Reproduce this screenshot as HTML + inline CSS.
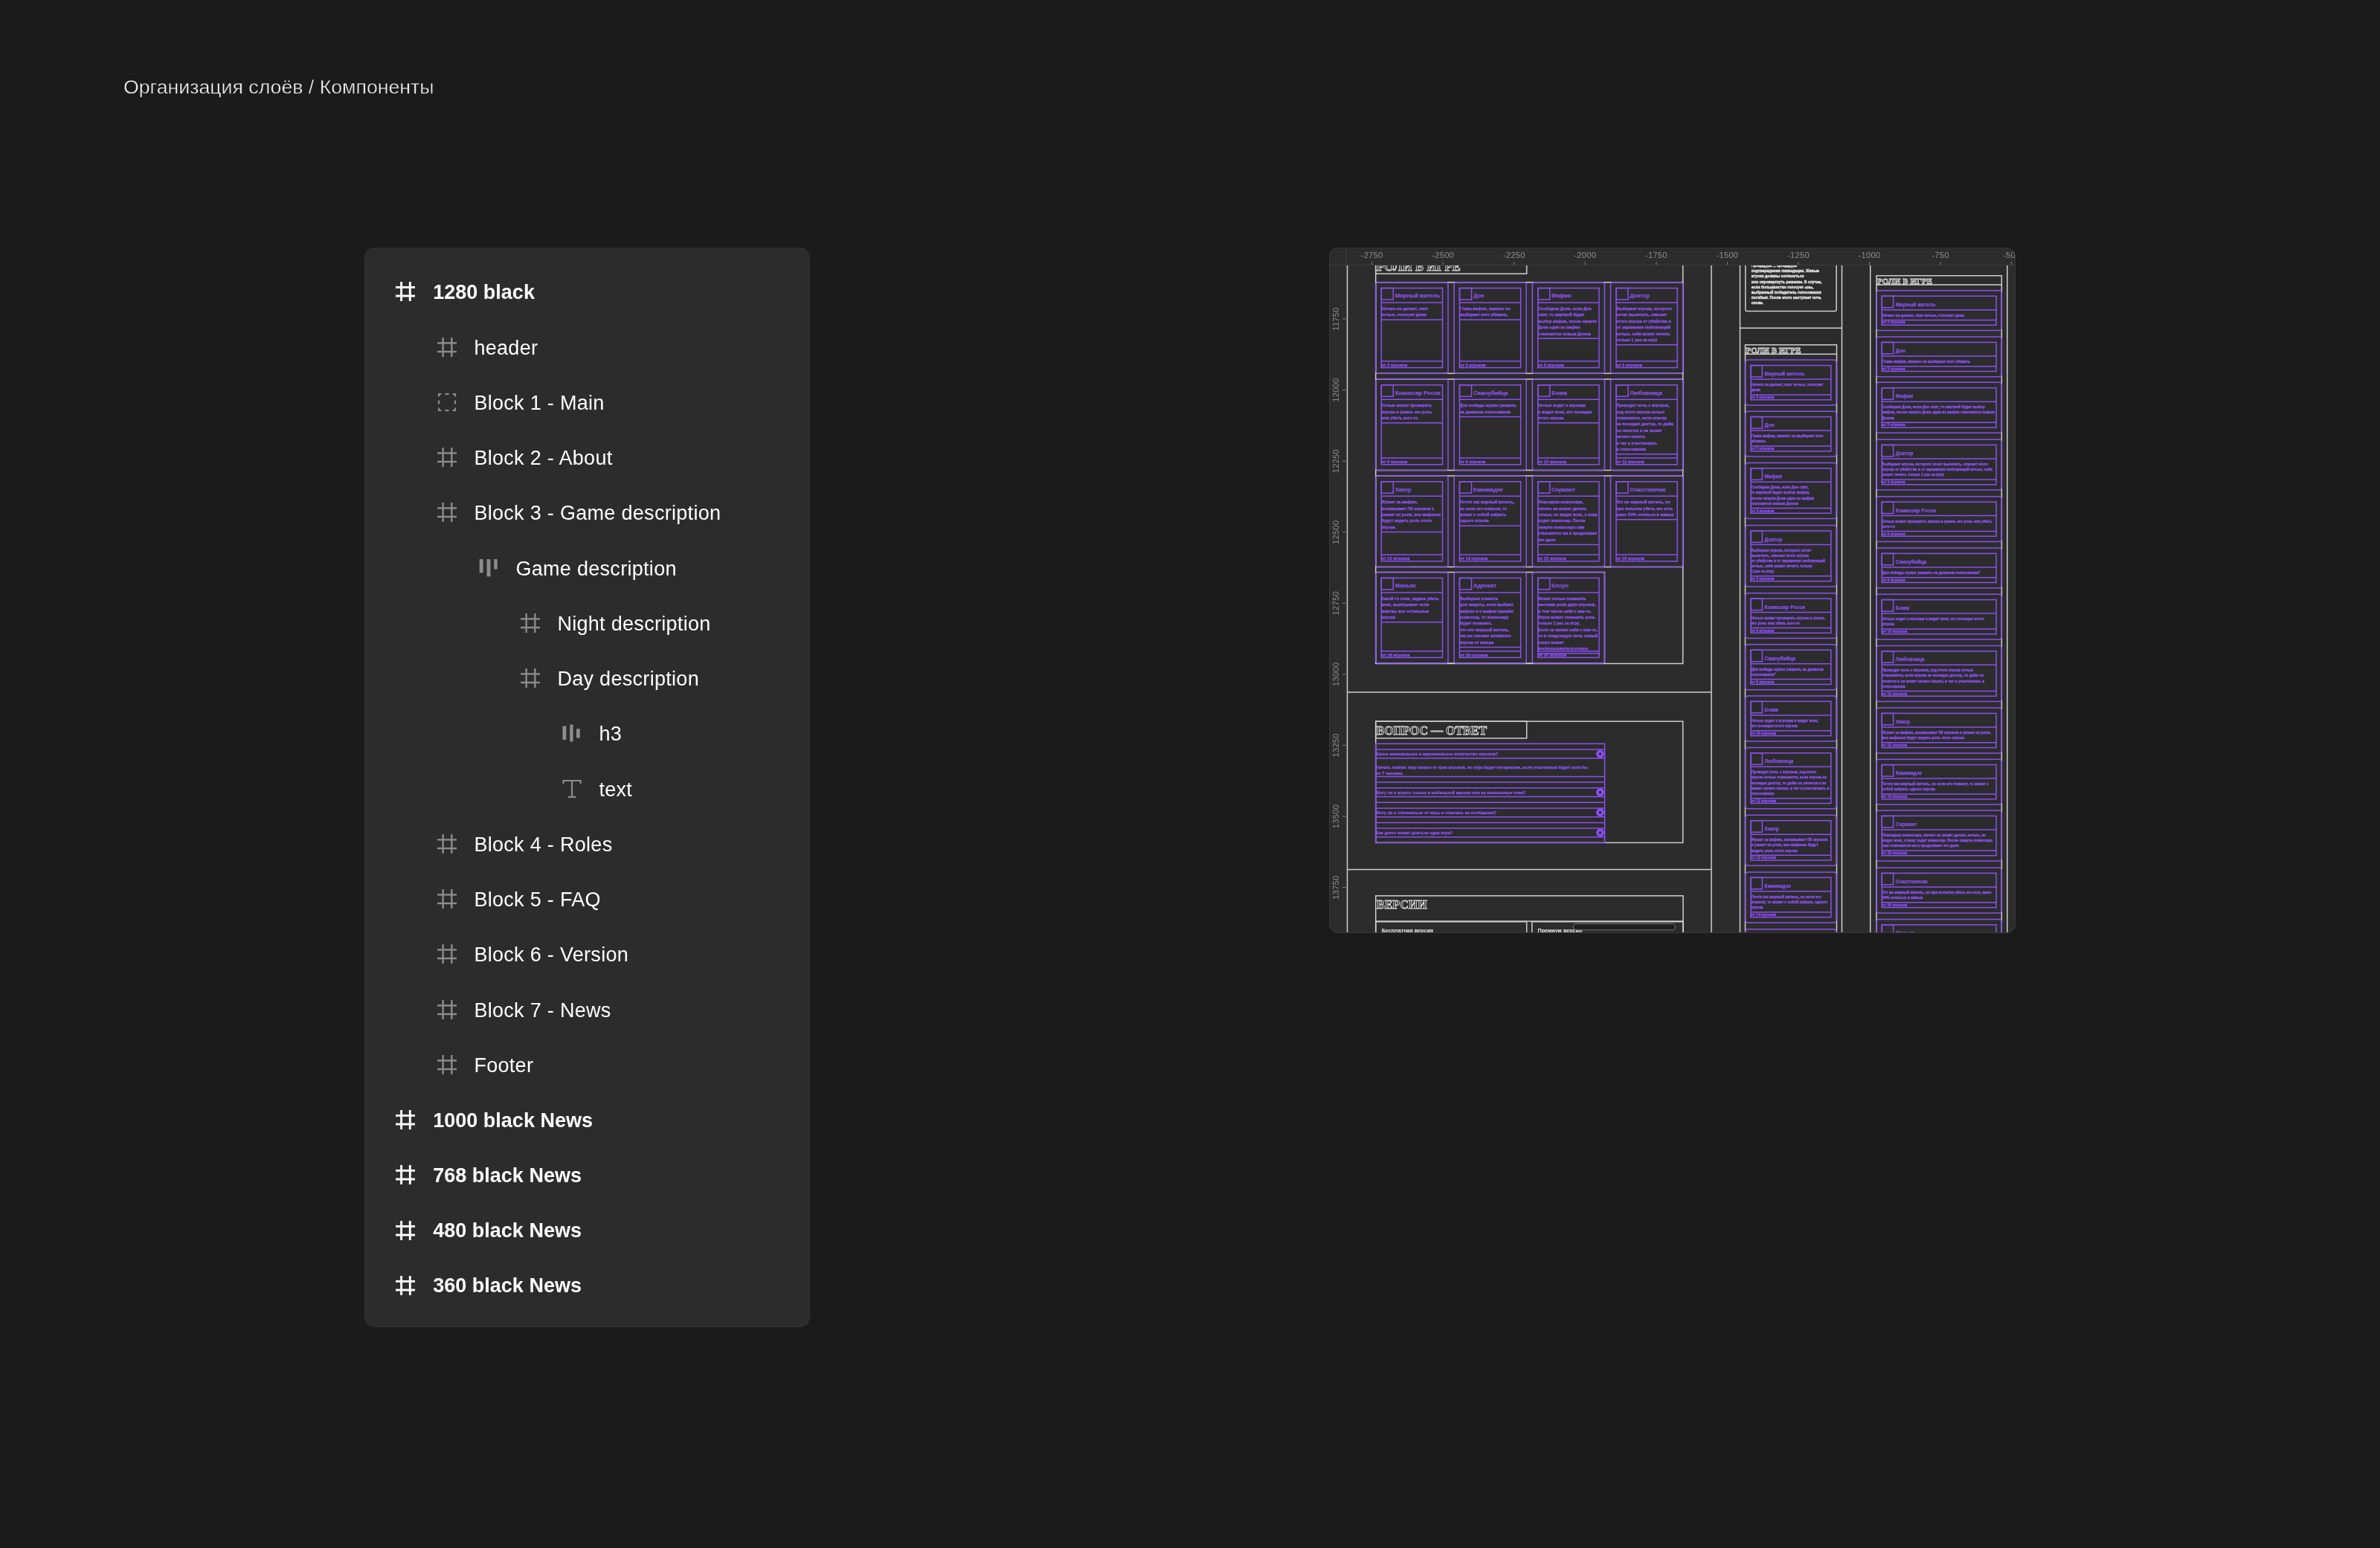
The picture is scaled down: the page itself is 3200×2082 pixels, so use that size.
<!DOCTYPE html><html><head><meta charset="utf-8"><style>
html,body{margin:0;padding:0;width:3200px;height:2082px;overflow:hidden;background:#1c1b1c;}
body{position:relative;font-family:"Liberation Sans", sans-serif;}
#wrap{position:absolute;left:0;top:0;width:3200px;height:2082px;will-change:transform;}
.t{position:absolute;white-space:nowrap;color:#fff;}
#panel{position:absolute;left:490px;top:333px;width:598.5px;height:1452px;background:#2c2c2c;border-radius:14px;box-shadow:inset 0 0 0 1px #313131;}
.row{position:absolute;height:40px;}
.lbl{position:absolute;white-space:nowrap;color:#fff;font-size:27px;line-height:40px;top:0;}
.ico{position:absolute;}
#canvas{position:absolute;left:0;top:0;}
</style></head><body><div id="wrap">
<div class="t" id="title" style="left:166px;top:99px;font-size:26.7px;line-height:36px;color:#f2f2f2;font-weight:normal;-webkit-text-stroke:0.45px #1c1b1c;">Организация слоёв / Компоненты</div>

<div id="panel"></div>
<svg class="ico" style="left:532px;top:379px" width="26" height="26" viewBox="0 0 26 26"><g stroke="#ffffff" stroke-width="2.9" fill="none"><line x1="7.6" y1="0" x2="7.6" y2="26"/><line x1="19.3" y1="0" x2="19.3" y2="26"/><line x1="0" y1="7.4" x2="26" y2="7.4"/><line x1="0" y1="19" x2="26" y2="19"/></g></svg>
<div class="lbl" style="left:582.30px;top:372.80px;font-weight:bold;letter-spacing:0px;">1280 black</div>
<svg class="ico" style="left:588px;top:454px" width="26" height="26" viewBox="0 0 26 26"><g stroke="#8c8c8c" stroke-width="2.4" fill="none"><line x1="7.6" y1="0" x2="7.6" y2="26"/><line x1="19.3" y1="0" x2="19.3" y2="26"/><line x1="0" y1="7.4" x2="26" y2="7.4"/><line x1="0" y1="19" x2="26" y2="19"/></g></svg>
<div class="lbl" style="left:637.40px;top:447.55px;font-weight:normal;letter-spacing:0.3px;">header</div>
<svg class="ico" style="left:588px;top:527.8px" width="26" height="26" viewBox="0 0 26 26"><g stroke="#8c8c8c" stroke-width="2.2" fill="none"><path d="M2,5.5 V2 H5.5"/><path d="M20.5,2 H24 V5.5"/><path d="M24,20.5 V24 H20.5"/><path d="M5.5,24 H2 V20.5"/><line x1="10.5" y1="2" x2="15.5" y2="2"/><line x1="10.5" y1="24" x2="15.5" y2="24"/><line x1="2" y1="10.5" x2="2" y2="15.5"/><line x1="24" y1="10.5" x2="24" y2="15.5"/></g></svg>
<div class="lbl" style="left:637.40px;top:521.80px;font-weight:normal;letter-spacing:0.3px;">Block 1 - Main</div>
<svg class="ico" style="left:588px;top:602px" width="26" height="26" viewBox="0 0 26 26"><g stroke="#8c8c8c" stroke-width="2.4" fill="none"><line x1="7.6" y1="0" x2="7.6" y2="26"/><line x1="19.3" y1="0" x2="19.3" y2="26"/><line x1="0" y1="7.4" x2="26" y2="7.4"/><line x1="0" y1="19" x2="26" y2="19"/></g></svg>
<div class="lbl" style="left:637.40px;top:596.05px;font-weight:normal;letter-spacing:0.3px;">Block 2 - About</div>
<svg class="ico" style="left:588px;top:676px" width="26" height="26" viewBox="0 0 26 26"><g stroke="#8c8c8c" stroke-width="2.4" fill="none"><line x1="7.6" y1="0" x2="7.6" y2="26"/><line x1="19.3" y1="0" x2="19.3" y2="26"/><line x1="0" y1="7.4" x2="26" y2="7.4"/><line x1="0" y1="19" x2="26" y2="19"/></g></svg>
<div class="lbl" style="left:637.40px;top:670.30px;font-weight:normal;letter-spacing:0.3px;">Block 3 - Game description</div>
<svg class="ico" style="left:644px;top:750.55px" width="26" height="26" viewBox="0 0 26 26"><g fill="#8c8c8c"><rect x="0.7" y="1.1" width="4.9" height="18.4"/><rect x="10.5" y="1.1" width="4.9" height="23.3"/><rect x="20.3" y="1.1" width="4.4" height="13.5"/></g></svg>
<div class="lbl" style="left:693.40px;top:744.55px;font-weight:normal;letter-spacing:0.3px;">Game description</div>
<svg class="ico" style="left:700px;top:825px" width="26" height="26" viewBox="0 0 26 26"><g stroke="#8c8c8c" stroke-width="2.4" fill="none"><line x1="7.6" y1="0" x2="7.6" y2="26"/><line x1="19.3" y1="0" x2="19.3" y2="26"/><line x1="0" y1="7.4" x2="26" y2="7.4"/><line x1="0" y1="19" x2="26" y2="19"/></g></svg>
<div class="lbl" style="left:749.40px;top:818.80px;font-weight:normal;letter-spacing:0.3px;">Night description</div>
<svg class="ico" style="left:700px;top:899px" width="26" height="26" viewBox="0 0 26 26"><g stroke="#8c8c8c" stroke-width="2.4" fill="none"><line x1="7.6" y1="0" x2="7.6" y2="26"/><line x1="19.3" y1="0" x2="19.3" y2="26"/><line x1="0" y1="7.4" x2="26" y2="7.4"/><line x1="0" y1="19" x2="26" y2="19"/></g></svg>
<div class="lbl" style="left:749.40px;top:893.05px;font-weight:normal;letter-spacing:0.3px;">Day description</div>
<svg class="ico" style="left:756px;top:973.3px" width="26" height="26" viewBox="0 0 26 26"><g fill="#8c8c8c"><rect x="0.4" y="3.5" width="4.9" height="18.5"/><rect x="10.2" y="1.5" width="4.4" height="22.9"/><rect x="19" y="7.2" width="4.7" height="12.3"/></g></svg>
<div class="lbl" style="left:805.40px;top:967.30px;font-weight:normal;letter-spacing:0.3px;">h3</div>
<svg class="ico" style="left:756px;top:1047.55px" width="26" height="26" viewBox="0 0 26 26"><g stroke="#8c8c8c" stroke-width="2.2" fill="none"><path d="M1.5,6 V2 H24.5 V6"/><line x1="13" y1="2" x2="13" y2="24"/><line x1="7.5" y1="24" x2="18.5" y2="24"/></g></svg>
<div class="lbl" style="left:805.40px;top:1041.55px;font-weight:normal;letter-spacing:0.3px;">text</div>
<svg class="ico" style="left:588px;top:1122px" width="26" height="26" viewBox="0 0 26 26"><g stroke="#8c8c8c" stroke-width="2.4" fill="none"><line x1="7.6" y1="0" x2="7.6" y2="26"/><line x1="19.3" y1="0" x2="19.3" y2="26"/><line x1="0" y1="7.4" x2="26" y2="7.4"/><line x1="0" y1="19" x2="26" y2="19"/></g></svg>
<div class="lbl" style="left:637.40px;top:1115.80px;font-weight:normal;letter-spacing:0.3px;">Block 4 - Roles</div>
<svg class="ico" style="left:588px;top:1196px" width="26" height="26" viewBox="0 0 26 26"><g stroke="#8c8c8c" stroke-width="2.4" fill="none"><line x1="7.6" y1="0" x2="7.6" y2="26"/><line x1="19.3" y1="0" x2="19.3" y2="26"/><line x1="0" y1="7.4" x2="26" y2="7.4"/><line x1="0" y1="19" x2="26" y2="19"/></g></svg>
<div class="lbl" style="left:637.40px;top:1190.05px;font-weight:normal;letter-spacing:0.3px;">Block 5 - FAQ</div>
<svg class="ico" style="left:588px;top:1270px" width="26" height="26" viewBox="0 0 26 26"><g stroke="#8c8c8c" stroke-width="2.4" fill="none"><line x1="7.6" y1="0" x2="7.6" y2="26"/><line x1="19.3" y1="0" x2="19.3" y2="26"/><line x1="0" y1="7.4" x2="26" y2="7.4"/><line x1="0" y1="19" x2="26" y2="19"/></g></svg>
<div class="lbl" style="left:637.40px;top:1264.30px;font-weight:normal;letter-spacing:0.3px;">Block 6 - Version</div>
<svg class="ico" style="left:588px;top:1345px" width="26" height="26" viewBox="0 0 26 26"><g stroke="#8c8c8c" stroke-width="2.4" fill="none"><line x1="7.6" y1="0" x2="7.6" y2="26"/><line x1="19.3" y1="0" x2="19.3" y2="26"/><line x1="0" y1="7.4" x2="26" y2="7.4"/><line x1="0" y1="19" x2="26" y2="19"/></g></svg>
<div class="lbl" style="left:637.40px;top:1338.55px;font-weight:normal;letter-spacing:0.3px;">Block 7 - News</div>
<svg class="ico" style="left:588px;top:1419px" width="26" height="26" viewBox="0 0 26 26"><g stroke="#8c8c8c" stroke-width="2.4" fill="none"><line x1="7.6" y1="0" x2="7.6" y2="26"/><line x1="19.3" y1="0" x2="19.3" y2="26"/><line x1="0" y1="7.4" x2="26" y2="7.4"/><line x1="0" y1="19" x2="26" y2="19"/></g></svg>
<div class="lbl" style="left:637.40px;top:1412.80px;font-weight:normal;letter-spacing:0.3px;">Footer</div>
<svg class="ico" style="left:532px;top:1493px" width="26" height="26" viewBox="0 0 26 26"><g stroke="#ffffff" stroke-width="2.9" fill="none"><line x1="7.6" y1="0" x2="7.6" y2="26"/><line x1="19.3" y1="0" x2="19.3" y2="26"/><line x1="0" y1="7.4" x2="26" y2="7.4"/><line x1="0" y1="19" x2="26" y2="19"/></g></svg>
<div class="lbl" style="left:582.30px;top:1486.55px;font-weight:bold;letter-spacing:0px;">1000 black News</div>
<svg class="ico" style="left:532px;top:1567px" width="26" height="26" viewBox="0 0 26 26"><g stroke="#ffffff" stroke-width="2.9" fill="none"><line x1="7.6" y1="0" x2="7.6" y2="26"/><line x1="19.3" y1="0" x2="19.3" y2="26"/><line x1="0" y1="7.4" x2="26" y2="7.4"/><line x1="0" y1="19" x2="26" y2="19"/></g></svg>
<div class="lbl" style="left:582.30px;top:1560.80px;font-weight:bold;letter-spacing:0px;">768 black News</div>
<svg class="ico" style="left:532px;top:1642px" width="26" height="26" viewBox="0 0 26 26"><g stroke="#ffffff" stroke-width="2.9" fill="none"><line x1="7.6" y1="0" x2="7.6" y2="26"/><line x1="19.3" y1="0" x2="19.3" y2="26"/><line x1="0" y1="7.4" x2="26" y2="7.4"/><line x1="0" y1="19" x2="26" y2="19"/></g></svg>
<div class="lbl" style="left:582.30px;top:1635.05px;font-weight:bold;letter-spacing:0px;">480 black News</div>
<svg class="ico" style="left:532px;top:1716px" width="26" height="26" viewBox="0 0 26 26"><g stroke="#ffffff" stroke-width="2.9" fill="none"><line x1="7.6" y1="0" x2="7.6" y2="26"/><line x1="19.3" y1="0" x2="19.3" y2="26"/><line x1="0" y1="7.4" x2="26" y2="7.4"/><line x1="0" y1="19" x2="26" y2="19"/></g></svg>
<div class="lbl" style="left:582.30px;top:1709.30px;font-weight:bold;letter-spacing:0px;">360 black News</div>
<svg id="canvas" width="3200" height="2082" viewBox="0 0 3200 2082">
<defs><clipPath id="cc"><rect x="1787" y="333" width="923" height="922" rx="12"/></clipPath><clipPath id="body"><rect x="1810" y="356.5" width="900" height="898.5"/></clipPath></defs>
<g clip-path="url(#cc)">
<rect x="1787" y="333" width="923" height="922" fill="#2c2c2c"/>
<g clip-path="url(#body)">
<line x1="1811.5" y1="340" x2="1811.5" y2="1260" stroke="#cfcfcf" stroke-width="1.5"/>
<line x1="2301" y1="340" x2="2301" y2="1260" stroke="#cfcfcf" stroke-width="1.5"/>
<line x1="1811.5" y1="931" x2="2301" y2="931" stroke="#cfcfcf" stroke-width="1.5"/>
<line x1="1811.5" y1="1169.6" x2="2301" y2="1169.6" stroke="#cfcfcf" stroke-width="1.5"/>
<rect x="1849.7" y="300" width="413" height="592.5" rx="0" fill="none" stroke="#cfcfcf" stroke-width="1.5"/>
<rect x="1849.7" y="300" width="203" height="68.2" rx="0" fill="none" stroke="#cfcfcf" stroke-width="1.5"/>
<text x="1851" y="363.5" font-size="16.8" fill="#3a3a3a" font-weight="bold" font-family='"Liberation Serif", serif' text-anchor="start" stroke="#dcdcdc" stroke-width="0.85">РОЛИ В ИГРЕ</text>
<rect x="1849.7" y="379.7" width="413" height="122.5" rx="0" fill="none" stroke="#cfcfcf" stroke-width="1.5"/>
<rect x="1849.8" y="379.7" width="97.2" height="122.5" rx="3" fill="none" stroke="#8a4ef2" stroke-width="1.5"/>
<rect x="1857.3" y="387.5" width="82.2" height="107.0" rx="0" fill="none" stroke="#8a4ef2" stroke-width="1.5"/>
<rect x="1857.3" y="387.5" width="16" height="15.4" rx="0" fill="none" stroke="#8a4ef2" stroke-width="1.5"/>
<line x1="1857.3" y1="407.0" x2="1939.5" y2="407.0" stroke="#8a4ef2" stroke-width="1.5"/>
<text x="1875.8" y="400.3" font-size="7.5" fill="#8a4ef2" font-weight="bold" font-family='"Liberation Sans", sans-serif' text-anchor="start" stroke="#8a4ef2" stroke-width="0.25">Мирный житель</text>
<line x1="1857.3" y1="430.1" x2="1939.5" y2="430.1" stroke="#8a4ef2" stroke-width="1.5"/>
<text x="1857.6" y="416.9" font-size="5.5" fill="#8a4ef2" font-weight="bold" font-family='"Liberation Sans", sans-serif' text-anchor="start" stroke="#8a4ef2" stroke-width="0.35">Ничего не делает, спит</text>
<text x="1857.6" y="425.29999999999995" font-size="5.5" fill="#8a4ef2" font-weight="bold" font-family='"Liberation Sans", sans-serif' text-anchor="start" stroke="#8a4ef2" stroke-width="0.35">ночью, голосует днем</text>
<line x1="1857.3" y1="485.8" x2="1939.5" y2="485.8" stroke="#8a4ef2" stroke-width="1.5"/>
<text x="1857.8" y="492.7" font-size="5.6" fill="#8a4ef2" font-weight="bold" font-family='"Liberation Sans", sans-serif' text-anchor="start" stroke="#8a4ef2" stroke-width="0.35">от 3 игроков</text>
<rect x="1955" y="379.7" width="97.2" height="122.5" rx="3" fill="none" stroke="#8a4ef2" stroke-width="1.5"/>
<rect x="1962.5" y="387.5" width="82.2" height="107.0" rx="0" fill="none" stroke="#8a4ef2" stroke-width="1.5"/>
<rect x="1962.5" y="387.5" width="16" height="15.4" rx="0" fill="none" stroke="#8a4ef2" stroke-width="1.5"/>
<line x1="1962.5" y1="407.0" x2="2044.7" y2="407.0" stroke="#8a4ef2" stroke-width="1.5"/>
<text x="1981.0" y="400.3" font-size="7.5" fill="#8a4ef2" font-weight="bold" font-family='"Liberation Sans", sans-serif' text-anchor="start" stroke="#8a4ef2" stroke-width="0.25">Дон</text>
<line x1="1962.5" y1="430.1" x2="2044.7" y2="430.1" stroke="#8a4ef2" stroke-width="1.5"/>
<text x="1962.8" y="416.9" font-size="5.5" fill="#8a4ef2" font-weight="bold" font-family='"Liberation Sans", sans-serif' text-anchor="start" stroke="#8a4ef2" stroke-width="0.35">Глава мафии, именно он</text>
<text x="1962.8" y="425.29999999999995" font-size="5.5" fill="#8a4ef2" font-weight="bold" font-family='"Liberation Sans", sans-serif' text-anchor="start" stroke="#8a4ef2" stroke-width="0.35">выбирает кого убивать</text>
<line x1="1962.5" y1="485.8" x2="2044.7" y2="485.8" stroke="#8a4ef2" stroke-width="1.5"/>
<text x="1963.0" y="492.7" font-size="5.6" fill="#8a4ef2" font-weight="bold" font-family='"Liberation Sans", sans-serif' text-anchor="start" stroke="#8a4ef2" stroke-width="0.35">от 3 игроков</text>
<rect x="2060.3" y="379.7" width="97.2" height="122.5" rx="3" fill="none" stroke="#8a4ef2" stroke-width="1.5"/>
<rect x="2067.8" y="387.5" width="82.2" height="107.0" rx="0" fill="none" stroke="#8a4ef2" stroke-width="1.5"/>
<rect x="2067.8" y="387.5" width="16" height="15.4" rx="0" fill="none" stroke="#8a4ef2" stroke-width="1.5"/>
<line x1="2067.8" y1="407.0" x2="2150.0" y2="407.0" stroke="#8a4ef2" stroke-width="1.5"/>
<text x="2086.3" y="400.3" font-size="7.5" fill="#8a4ef2" font-weight="bold" font-family='"Liberation Sans", sans-serif' text-anchor="start" stroke="#8a4ef2" stroke-width="0.25">Мафия</text>
<line x1="2067.8" y1="455.3" x2="2150.0" y2="455.3" stroke="#8a4ef2" stroke-width="1.5"/>
<text x="2068.1000000000004" y="416.9" font-size="5.5" fill="#8a4ef2" font-weight="bold" font-family='"Liberation Sans", sans-serif' text-anchor="start" stroke="#8a4ef2" stroke-width="0.35">Сообщник Дона, если Дон</text>
<text x="2068.1000000000004" y="425.29999999999995" font-size="5.5" fill="#8a4ef2" font-weight="bold" font-family='"Liberation Sans", sans-serif' text-anchor="start" stroke="#8a4ef2" stroke-width="0.35">спит, то жертвой будет</text>
<text x="2068.1000000000004" y="433.7" font-size="5.5" fill="#8a4ef2" font-weight="bold" font-family='"Liberation Sans", sans-serif' text-anchor="start" stroke="#8a4ef2" stroke-width="0.35">выбор мафии, после смерти</text>
<text x="2068.1000000000004" y="442.09999999999997" font-size="5.5" fill="#8a4ef2" font-weight="bold" font-family='"Liberation Sans", sans-serif' text-anchor="start" stroke="#8a4ef2" stroke-width="0.35">Дона один из мафии</text>
<text x="2068.1000000000004" y="450.5" font-size="5.5" fill="#8a4ef2" font-weight="bold" font-family='"Liberation Sans", sans-serif' text-anchor="start" stroke="#8a4ef2" stroke-width="0.35">становится новым Доном</text>
<line x1="2067.8" y1="485.8" x2="2150.0" y2="485.8" stroke="#8a4ef2" stroke-width="1.5"/>
<text x="2068.3" y="492.7" font-size="5.6" fill="#8a4ef2" font-weight="bold" font-family='"Liberation Sans", sans-serif' text-anchor="start" stroke="#8a4ef2" stroke-width="0.35">от 3 игроков</text>
<rect x="2165.5" y="379.7" width="97.2" height="122.5" rx="3" fill="none" stroke="#8a4ef2" stroke-width="1.5"/>
<rect x="2173.0" y="387.5" width="82.2" height="107.0" rx="0" fill="none" stroke="#8a4ef2" stroke-width="1.5"/>
<rect x="2173.0" y="387.5" width="16" height="15.4" rx="0" fill="none" stroke="#8a4ef2" stroke-width="1.5"/>
<line x1="2173.0" y1="407.0" x2="2255.2" y2="407.0" stroke="#8a4ef2" stroke-width="1.5"/>
<text x="2191.5" y="400.3" font-size="7.5" fill="#8a4ef2" font-weight="bold" font-family='"Liberation Sans", sans-serif' text-anchor="start" stroke="#8a4ef2" stroke-width="0.25">Доктор</text>
<line x1="2173.0" y1="463.70000000000005" x2="2255.2" y2="463.70000000000005" stroke="#8a4ef2" stroke-width="1.5"/>
<text x="2173.3" y="416.9" font-size="5.5" fill="#8a4ef2" font-weight="bold" font-family='"Liberation Sans", sans-serif' text-anchor="start" stroke="#8a4ef2" stroke-width="0.35">Выбирает игрока, которого</text>
<text x="2173.3" y="425.29999999999995" font-size="5.5" fill="#8a4ef2" font-weight="bold" font-family='"Liberation Sans", sans-serif' text-anchor="start" stroke="#8a4ef2" stroke-width="0.35">хочет вылечить, спасает</text>
<text x="2173.3" y="433.7" font-size="5.5" fill="#8a4ef2" font-weight="bold" font-family='"Liberation Sans", sans-serif' text-anchor="start" stroke="#8a4ef2" stroke-width="0.35">этого игрока от убийства и</text>
<text x="2173.3" y="442.09999999999997" font-size="5.5" fill="#8a4ef2" font-weight="bold" font-family='"Liberation Sans", sans-serif' text-anchor="start" stroke="#8a4ef2" stroke-width="0.35">от заражения любовницей</text>
<text x="2173.3" y="450.5" font-size="5.5" fill="#8a4ef2" font-weight="bold" font-family='"Liberation Sans", sans-serif' text-anchor="start" stroke="#8a4ef2" stroke-width="0.35">ночью, себя может лечить</text>
<text x="2173.3" y="458.9" font-size="5.5" fill="#8a4ef2" font-weight="bold" font-family='"Liberation Sans", sans-serif' text-anchor="start" stroke="#8a4ef2" stroke-width="0.35">только 1 раз за игру</text>
<line x1="2173.0" y1="485.8" x2="2255.2" y2="485.8" stroke="#8a4ef2" stroke-width="1.5"/>
<text x="2173.5" y="492.7" font-size="5.6" fill="#8a4ef2" font-weight="bold" font-family='"Liberation Sans", sans-serif' text-anchor="start" stroke="#8a4ef2" stroke-width="0.35">от 3 игроков</text>
<rect x="1849.7" y="510" width="413" height="122.5" rx="0" fill="none" stroke="#cfcfcf" stroke-width="1.5"/>
<rect x="1849.8" y="510" width="97.2" height="122.5" rx="3" fill="none" stroke="#8a4ef2" stroke-width="1.5"/>
<rect x="1857.3" y="517.8" width="82.2" height="107.0" rx="0" fill="none" stroke="#8a4ef2" stroke-width="1.5"/>
<rect x="1857.3" y="517.8" width="16" height="15.4" rx="0" fill="none" stroke="#8a4ef2" stroke-width="1.5"/>
<line x1="1857.3" y1="537.3" x2="1939.5" y2="537.3" stroke="#8a4ef2" stroke-width="1.5"/>
<text x="1875.8" y="530.5999999999999" font-size="7.5" fill="#8a4ef2" font-weight="bold" font-family='"Liberation Sans", sans-serif' text-anchor="start" stroke="#8a4ef2" stroke-width="0.25">Комиссар Росси</text>
<line x1="1857.3" y1="568.8" x2="1939.5" y2="568.8" stroke="#8a4ef2" stroke-width="1.5"/>
<text x="1857.6" y="547.1999999999999" font-size="5.5" fill="#8a4ef2" font-weight="bold" font-family='"Liberation Sans", sans-serif' text-anchor="start" stroke="#8a4ef2" stroke-width="0.35">Ночью может проверить</text>
<text x="1857.6" y="555.5999999999999" font-size="5.5" fill="#8a4ef2" font-weight="bold" font-family='"Liberation Sans", sans-serif' text-anchor="start" stroke="#8a4ef2" stroke-width="0.35">игрока и узнать его роль</text>
<text x="1857.6" y="563.9999999999999" font-size="5.5" fill="#8a4ef2" font-weight="bold" font-family='"Liberation Sans", sans-serif' text-anchor="start" stroke="#8a4ef2" stroke-width="0.35">или убить кого-то</text>
<line x1="1857.3" y1="616.0999999999999" x2="1939.5" y2="616.0999999999999" stroke="#8a4ef2" stroke-width="1.5"/>
<text x="1857.8" y="623.0" font-size="5.6" fill="#8a4ef2" font-weight="bold" font-family='"Liberation Sans", sans-serif' text-anchor="start" stroke="#8a4ef2" stroke-width="0.35">от 6 игроков</text>
<rect x="1955" y="510" width="97.2" height="122.5" rx="3" fill="none" stroke="#8a4ef2" stroke-width="1.5"/>
<rect x="1962.5" y="517.8" width="82.2" height="107.0" rx="0" fill="none" stroke="#8a4ef2" stroke-width="1.5"/>
<rect x="1962.5" y="517.8" width="16" height="15.4" rx="0" fill="none" stroke="#8a4ef2" stroke-width="1.5"/>
<line x1="1962.5" y1="537.3" x2="2044.7" y2="537.3" stroke="#8a4ef2" stroke-width="1.5"/>
<text x="1981.0" y="530.5999999999999" font-size="7.5" fill="#8a4ef2" font-weight="bold" font-family='"Liberation Sans", sans-serif' text-anchor="start" stroke="#8a4ef2" stroke-width="0.25">Самоубийца</text>
<line x1="1962.5" y1="560.3999999999999" x2="2044.7" y2="560.3999999999999" stroke="#8a4ef2" stroke-width="1.5"/>
<text x="1962.8" y="547.1999999999999" font-size="5.5" fill="#8a4ef2" font-weight="bold" font-family='"Liberation Sans", sans-serif' text-anchor="start" stroke="#8a4ef2" stroke-width="0.35">Для победы нужно умереть</text>
<text x="1962.8" y="555.5999999999999" font-size="5.5" fill="#8a4ef2" font-weight="bold" font-family='"Liberation Sans", sans-serif' text-anchor="start" stroke="#8a4ef2" stroke-width="0.35">на дневном голосовании</text>
<line x1="1962.5" y1="616.0999999999999" x2="2044.7" y2="616.0999999999999" stroke="#8a4ef2" stroke-width="1.5"/>
<text x="1963.0" y="623.0" font-size="5.6" fill="#8a4ef2" font-weight="bold" font-family='"Liberation Sans", sans-serif' text-anchor="start" stroke="#8a4ef2" stroke-width="0.35">от 8 игроков</text>
<rect x="2060.3" y="510" width="97.2" height="122.5" rx="3" fill="none" stroke="#8a4ef2" stroke-width="1.5"/>
<rect x="2067.8" y="517.8" width="82.2" height="107.0" rx="0" fill="none" stroke="#8a4ef2" stroke-width="1.5"/>
<rect x="2067.8" y="517.8" width="16" height="15.4" rx="0" fill="none" stroke="#8a4ef2" stroke-width="1.5"/>
<line x1="2067.8" y1="537.3" x2="2150.0" y2="537.3" stroke="#8a4ef2" stroke-width="1.5"/>
<text x="2086.3" y="530.5999999999999" font-size="7.5" fill="#8a4ef2" font-weight="bold" font-family='"Liberation Sans", sans-serif' text-anchor="start" stroke="#8a4ef2" stroke-width="0.25">Бомж</text>
<line x1="2067.8" y1="568.8" x2="2150.0" y2="568.8" stroke="#8a4ef2" stroke-width="1.5"/>
<text x="2068.1000000000004" y="547.1999999999999" font-size="5.5" fill="#8a4ef2" font-weight="bold" font-family='"Liberation Sans", sans-serif' text-anchor="start" stroke="#8a4ef2" stroke-width="0.35">Ночью ходит к игрокам</text>
<text x="2068.1000000000004" y="555.5999999999999" font-size="5.5" fill="#8a4ef2" font-weight="bold" font-family='"Liberation Sans", sans-serif' text-anchor="start" stroke="#8a4ef2" stroke-width="0.35">и видит всех, кто посещал</text>
<text x="2068.1000000000004" y="563.9999999999999" font-size="5.5" fill="#8a4ef2" font-weight="bold" font-family='"Liberation Sans", sans-serif' text-anchor="start" stroke="#8a4ef2" stroke-width="0.35">этого игрока</text>
<line x1="2067.8" y1="616.0999999999999" x2="2150.0" y2="616.0999999999999" stroke="#8a4ef2" stroke-width="1.5"/>
<text x="2068.3" y="623.0" font-size="5.6" fill="#8a4ef2" font-weight="bold" font-family='"Liberation Sans", sans-serif' text-anchor="start" stroke="#8a4ef2" stroke-width="0.35">от 10 игроков</text>
<rect x="2165.5" y="510" width="97.2" height="122.5" rx="3" fill="none" stroke="#8a4ef2" stroke-width="1.5"/>
<rect x="2173.0" y="517.8" width="82.2" height="107.0" rx="0" fill="none" stroke="#8a4ef2" stroke-width="1.5"/>
<rect x="2173.0" y="517.8" width="16" height="15.4" rx="0" fill="none" stroke="#8a4ef2" stroke-width="1.5"/>
<line x1="2173.0" y1="537.3" x2="2255.2" y2="537.3" stroke="#8a4ef2" stroke-width="1.5"/>
<text x="2191.5" y="530.5999999999999" font-size="7.5" fill="#8a4ef2" font-weight="bold" font-family='"Liberation Sans", sans-serif' text-anchor="start" stroke="#8a4ef2" stroke-width="0.25">Любовница</text>
<line x1="2173.0" y1="610.8" x2="2255.2" y2="610.8" stroke="#8a4ef2" stroke-width="1.5"/>
<text x="2173.3" y="547.1999999999999" font-size="5.5" fill="#8a4ef2" font-weight="bold" font-family='"Liberation Sans", sans-serif' text-anchor="start" stroke="#8a4ef2" stroke-width="0.35">Проводит ночь с игроком,</text>
<text x="2173.3" y="555.5999999999999" font-size="5.5" fill="#8a4ef2" font-weight="bold" font-family='"Liberation Sans", sans-serif' text-anchor="start" stroke="#8a4ef2" stroke-width="0.35">ход этого игрока ночью</text>
<text x="2173.3" y="563.9999999999999" font-size="5.5" fill="#8a4ef2" font-weight="bold" font-family='"Liberation Sans", sans-serif' text-anchor="start" stroke="#8a4ef2" stroke-width="0.35">отменяется, если игрока</text>
<text x="2173.3" y="572.4" font-size="5.5" fill="#8a4ef2" font-weight="bold" font-family='"Liberation Sans", sans-serif' text-anchor="start" stroke="#8a4ef2" stroke-width="0.35">не посещал доктор, то днём</text>
<text x="2173.3" y="580.8" font-size="5.5" fill="#8a4ef2" font-weight="bold" font-family='"Liberation Sans", sans-serif' text-anchor="start" stroke="#8a4ef2" stroke-width="0.35">он лечится и не может</text>
<text x="2173.3" y="589.1999999999999" font-size="5.5" fill="#8a4ef2" font-weight="bold" font-family='"Liberation Sans", sans-serif' text-anchor="start" stroke="#8a4ef2" stroke-width="0.35">ничего писать</text>
<text x="2173.3" y="597.5999999999999" font-size="5.5" fill="#8a4ef2" font-weight="bold" font-family='"Liberation Sans", sans-serif' text-anchor="start" stroke="#8a4ef2" stroke-width="0.35">в чат и участвовать</text>
<text x="2173.3" y="605.9999999999999" font-size="5.5" fill="#8a4ef2" font-weight="bold" font-family='"Liberation Sans", sans-serif' text-anchor="start" stroke="#8a4ef2" stroke-width="0.35">в голосовании</text>
<line x1="2173.0" y1="616.0999999999999" x2="2255.2" y2="616.0999999999999" stroke="#8a4ef2" stroke-width="1.5"/>
<text x="2173.5" y="623.0" font-size="5.6" fill="#8a4ef2" font-weight="bold" font-family='"Liberation Sans", sans-serif' text-anchor="start" stroke="#8a4ef2" stroke-width="0.35">от 12 игроков</text>
<rect x="1849.7" y="640" width="413" height="122.5" rx="0" fill="none" stroke="#cfcfcf" stroke-width="1.5"/>
<rect x="1849.8" y="640" width="97.2" height="122.5" rx="3" fill="none" stroke="#8a4ef2" stroke-width="1.5"/>
<rect x="1857.3" y="647.8" width="82.2" height="107.0" rx="0" fill="none" stroke="#8a4ef2" stroke-width="1.5"/>
<rect x="1857.3" y="647.8" width="16" height="15.4" rx="0" fill="none" stroke="#8a4ef2" stroke-width="1.5"/>
<line x1="1857.3" y1="667.3" x2="1939.5" y2="667.3" stroke="#8a4ef2" stroke-width="1.5"/>
<text x="1875.8" y="660.5999999999999" font-size="7.5" fill="#8a4ef2" font-weight="bold" font-family='"Liberation Sans", sans-serif' text-anchor="start" stroke="#8a4ef2" stroke-width="0.25">Хакер</text>
<line x1="1857.3" y1="715.5999999999999" x2="1939.5" y2="715.5999999999999" stroke="#8a4ef2" stroke-width="1.5"/>
<text x="1857.6" y="677.1999999999999" font-size="5.5" fill="#8a4ef2" font-weight="bold" font-family='"Liberation Sans", sans-serif' text-anchor="start" stroke="#8a4ef2" stroke-width="0.35">Играет за мафию,</text>
<text x="1857.6" y="685.5999999999999" font-size="5.5" fill="#8a4ef2" font-weight="bold" font-family='"Liberation Sans", sans-serif' text-anchor="start" stroke="#8a4ef2" stroke-width="0.35">взламывает ПК игроков и</text>
<text x="1857.6" y="693.9999999999999" font-size="5.5" fill="#8a4ef2" font-weight="bold" font-family='"Liberation Sans", sans-serif' text-anchor="start" stroke="#8a4ef2" stroke-width="0.35">узнает их роли, все мафиози</text>
<text x="1857.6" y="702.4" font-size="5.5" fill="#8a4ef2" font-weight="bold" font-family='"Liberation Sans", sans-serif' text-anchor="start" stroke="#8a4ef2" stroke-width="0.35">будут видеть роль этого</text>
<text x="1857.6" y="710.8" font-size="5.5" fill="#8a4ef2" font-weight="bold" font-family='"Liberation Sans", sans-serif' text-anchor="start" stroke="#8a4ef2" stroke-width="0.35">игрока</text>
<line x1="1857.3" y1="746.0999999999999" x2="1939.5" y2="746.0999999999999" stroke="#8a4ef2" stroke-width="1.5"/>
<text x="1857.8" y="753.0" font-size="5.6" fill="#8a4ef2" font-weight="bold" font-family='"Liberation Sans", sans-serif' text-anchor="start" stroke="#8a4ef2" stroke-width="0.35">от 12 игроков</text>
<rect x="1955" y="640" width="97.2" height="122.5" rx="3" fill="none" stroke="#8a4ef2" stroke-width="1.5"/>
<rect x="1962.5" y="647.8" width="82.2" height="107.0" rx="0" fill="none" stroke="#8a4ef2" stroke-width="1.5"/>
<rect x="1962.5" y="647.8" width="16" height="15.4" rx="0" fill="none" stroke="#8a4ef2" stroke-width="1.5"/>
<line x1="1962.5" y1="667.3" x2="2044.7" y2="667.3" stroke="#8a4ef2" stroke-width="1.5"/>
<text x="1981.0" y="660.5999999999999" font-size="7.5" fill="#8a4ef2" font-weight="bold" font-family='"Liberation Sans", sans-serif' text-anchor="start" stroke="#8a4ef2" stroke-width="0.25">Камикадзе</text>
<line x1="1962.5" y1="707.1999999999999" x2="2044.7" y2="707.1999999999999" stroke="#8a4ef2" stroke-width="1.5"/>
<text x="1962.8" y="677.1999999999999" font-size="5.5" fill="#8a4ef2" font-weight="bold" font-family='"Liberation Sans", sans-serif' text-anchor="start" stroke="#8a4ef2" stroke-width="0.35">Почти как мирный житель,</text>
<text x="1962.8" y="685.5999999999999" font-size="5.5" fill="#8a4ef2" font-weight="bold" font-family='"Liberation Sans", sans-serif' text-anchor="start" stroke="#8a4ef2" stroke-width="0.35">но если его повесят, то</text>
<text x="1962.8" y="693.9999999999999" font-size="5.5" fill="#8a4ef2" font-weight="bold" font-family='"Liberation Sans", sans-serif' text-anchor="start" stroke="#8a4ef2" stroke-width="0.35">может с собой забрать</text>
<text x="1962.8" y="702.4" font-size="5.5" fill="#8a4ef2" font-weight="bold" font-family='"Liberation Sans", sans-serif' text-anchor="start" stroke="#8a4ef2" stroke-width="0.35">одного игрока</text>
<line x1="1962.5" y1="746.0999999999999" x2="2044.7" y2="746.0999999999999" stroke="#8a4ef2" stroke-width="1.5"/>
<text x="1963.0" y="753.0" font-size="5.6" fill="#8a4ef2" font-weight="bold" font-family='"Liberation Sans", sans-serif' text-anchor="start" stroke="#8a4ef2" stroke-width="0.35">от 14 игроков</text>
<rect x="2060.3" y="640" width="97.2" height="122.5" rx="3" fill="none" stroke="#8a4ef2" stroke-width="1.5"/>
<rect x="2067.8" y="647.8" width="82.2" height="107.0" rx="0" fill="none" stroke="#8a4ef2" stroke-width="1.5"/>
<rect x="2067.8" y="647.8" width="16" height="15.4" rx="0" fill="none" stroke="#8a4ef2" stroke-width="1.5"/>
<line x1="2067.8" y1="667.3" x2="2150.0" y2="667.3" stroke="#8a4ef2" stroke-width="1.5"/>
<text x="2086.3" y="660.5999999999999" font-size="7.5" fill="#8a4ef2" font-weight="bold" font-family='"Liberation Sans", sans-serif' text-anchor="start" stroke="#8a4ef2" stroke-width="0.25">Сержант</text>
<line x1="2067.8" y1="732.3999999999999" x2="2150.0" y2="732.3999999999999" stroke="#8a4ef2" stroke-width="1.5"/>
<text x="2068.1000000000004" y="677.1999999999999" font-size="5.5" fill="#8a4ef2" font-weight="bold" font-family='"Liberation Sans", sans-serif' text-anchor="start" stroke="#8a4ef2" stroke-width="0.35">Помощник комиссара,</text>
<text x="2068.1000000000004" y="685.5999999999999" font-size="5.5" fill="#8a4ef2" font-weight="bold" font-family='"Liberation Sans", sans-serif' text-anchor="start" stroke="#8a4ef2" stroke-width="0.35">ничего не может делать</text>
<text x="2068.1000000000004" y="693.9999999999999" font-size="5.5" fill="#8a4ef2" font-weight="bold" font-family='"Liberation Sans", sans-serif' text-anchor="start" stroke="#8a4ef2" stroke-width="0.35">ночью, но видит всех, к кому</text>
<text x="2068.1000000000004" y="702.4" font-size="5.5" fill="#8a4ef2" font-weight="bold" font-family='"Liberation Sans", sans-serif' text-anchor="start" stroke="#8a4ef2" stroke-width="0.35">ходит комиссар. После</text>
<text x="2068.1000000000004" y="710.8" font-size="5.5" fill="#8a4ef2" font-weight="bold" font-family='"Liberation Sans", sans-serif' text-anchor="start" stroke="#8a4ef2" stroke-width="0.35">смерти комиссара сам</text>
<text x="2068.1000000000004" y="719.1999999999999" font-size="5.5" fill="#8a4ef2" font-weight="bold" font-family='"Liberation Sans", sans-serif' text-anchor="start" stroke="#8a4ef2" stroke-width="0.35">становится им и продолжает</text>
<text x="2068.1000000000004" y="727.5999999999999" font-size="5.5" fill="#8a4ef2" font-weight="bold" font-family='"Liberation Sans", sans-serif' text-anchor="start" stroke="#8a4ef2" stroke-width="0.35">его дело</text>
<line x1="2067.8" y1="746.0999999999999" x2="2150.0" y2="746.0999999999999" stroke="#8a4ef2" stroke-width="1.5"/>
<text x="2068.3" y="753.0" font-size="5.6" fill="#8a4ef2" font-weight="bold" font-family='"Liberation Sans", sans-serif' text-anchor="start" stroke="#8a4ef2" stroke-width="0.35">от 15 игроков</text>
<rect x="2165.5" y="640" width="97.2" height="122.5" rx="3" fill="none" stroke="#8a4ef2" stroke-width="1.5"/>
<rect x="2173.0" y="647.8" width="82.2" height="107.0" rx="0" fill="none" stroke="#8a4ef2" stroke-width="1.5"/>
<rect x="2173.0" y="647.8" width="16" height="15.4" rx="0" fill="none" stroke="#8a4ef2" stroke-width="1.5"/>
<line x1="2173.0" y1="667.3" x2="2255.2" y2="667.3" stroke="#8a4ef2" stroke-width="1.5"/>
<text x="2191.5" y="660.5999999999999" font-size="7.5" fill="#8a4ef2" font-weight="bold" font-family='"Liberation Sans", sans-serif' text-anchor="start" stroke="#8a4ef2" stroke-width="0.25">Счастливчик</text>
<line x1="2173.0" y1="698.8" x2="2255.2" y2="698.8" stroke="#8a4ef2" stroke-width="1.5"/>
<text x="2173.3" y="677.1999999999999" font-size="5.5" fill="#8a4ef2" font-weight="bold" font-family='"Liberation Sans", sans-serif' text-anchor="start" stroke="#8a4ef2" stroke-width="0.35">Тот же мирный житель, но</text>
<text x="2173.3" y="685.5999999999999" font-size="5.5" fill="#8a4ef2" font-weight="bold" font-family='"Liberation Sans", sans-serif' text-anchor="start" stroke="#8a4ef2" stroke-width="0.35">при попытке убить его есть</text>
<text x="2173.3" y="693.9999999999999" font-size="5.5" fill="#8a4ef2" font-weight="bold" font-family='"Liberation Sans", sans-serif' text-anchor="start" stroke="#8a4ef2" stroke-width="0.35">шанс 50% остаться в живых</text>
<line x1="2173.0" y1="746.0999999999999" x2="2255.2" y2="746.0999999999999" stroke="#8a4ef2" stroke-width="1.5"/>
<text x="2173.5" y="753.0" font-size="5.6" fill="#8a4ef2" font-weight="bold" font-family='"Liberation Sans", sans-serif' text-anchor="start" stroke="#8a4ef2" stroke-width="0.35">от 15 игроков</text>
<rect x="1849.7" y="769.6" width="307.7" height="122.5" rx="0" fill="none" stroke="#cfcfcf" stroke-width="1.5"/>
<rect x="1849.8" y="769.6" width="97.2" height="122.5" rx="3" fill="none" stroke="#8a4ef2" stroke-width="1.5"/>
<rect x="1857.3" y="777.4" width="82.2" height="107.0" rx="0" fill="none" stroke="#8a4ef2" stroke-width="1.5"/>
<rect x="1857.3" y="777.4" width="16" height="15.4" rx="0" fill="none" stroke="#8a4ef2" stroke-width="1.5"/>
<line x1="1857.3" y1="796.9" x2="1939.5" y2="796.9" stroke="#8a4ef2" stroke-width="1.5"/>
<text x="1875.8" y="790.1999999999999" font-size="7.5" fill="#8a4ef2" font-weight="bold" font-family='"Liberation Sans", sans-serif' text-anchor="start" stroke="#8a4ef2" stroke-width="0.25">Маньяк</text>
<line x1="1857.3" y1="836.8" x2="1939.5" y2="836.8" stroke="#8a4ef2" stroke-width="1.5"/>
<text x="1857.6" y="806.8" font-size="5.5" fill="#8a4ef2" font-weight="bold" font-family='"Liberation Sans", sans-serif' text-anchor="start" stroke="#8a4ef2" stroke-width="0.35">Какой-то псих, задача убить</text>
<text x="1857.6" y="815.1999999999999" font-size="5.5" fill="#8a4ef2" font-weight="bold" font-family='"Liberation Sans", sans-serif' text-anchor="start" stroke="#8a4ef2" stroke-width="0.35">всех, выигрывает если</text>
<text x="1857.6" y="823.5999999999999" font-size="5.5" fill="#8a4ef2" font-weight="bold" font-family='"Liberation Sans", sans-serif' text-anchor="start" stroke="#8a4ef2" stroke-width="0.35">жертвы все остальные</text>
<text x="1857.6" y="832.0" font-size="5.5" fill="#8a4ef2" font-weight="bold" font-family='"Liberation Sans", sans-serif' text-anchor="start" stroke="#8a4ef2" stroke-width="0.35">игроки</text>
<line x1="1857.3" y1="875.6999999999999" x2="1939.5" y2="875.6999999999999" stroke="#8a4ef2" stroke-width="1.5"/>
<text x="1857.8" y="882.6" font-size="5.6" fill="#8a4ef2" font-weight="bold" font-family='"Liberation Sans", sans-serif' text-anchor="start" stroke="#8a4ef2" stroke-width="0.35">от 16 игроков</text>
<rect x="1955" y="769.6" width="97.2" height="122.5" rx="3" fill="none" stroke="#8a4ef2" stroke-width="1.5"/>
<rect x="1962.5" y="777.4" width="82.2" height="107.0" rx="0" fill="none" stroke="#8a4ef2" stroke-width="1.5"/>
<rect x="1962.5" y="777.4" width="16" height="15.4" rx="0" fill="none" stroke="#8a4ef2" stroke-width="1.5"/>
<line x1="1962.5" y1="796.9" x2="2044.7" y2="796.9" stroke="#8a4ef2" stroke-width="1.5"/>
<text x="1981.0" y="790.1999999999999" font-size="7.5" fill="#8a4ef2" font-weight="bold" font-family='"Liberation Sans", sans-serif' text-anchor="start" stroke="#8a4ef2" stroke-width="0.25">Адвокат</text>
<line x1="1962.5" y1="870.4" x2="2044.7" y2="870.4" stroke="#8a4ef2" stroke-width="1.5"/>
<text x="1962.8" y="806.8" font-size="5.5" fill="#8a4ef2" font-weight="bold" font-family='"Liberation Sans", sans-serif' text-anchor="start" stroke="#8a4ef2" stroke-width="0.35">Выбирает клиента</text>
<text x="1962.8" y="815.1999999999999" font-size="5.5" fill="#8a4ef2" font-weight="bold" font-family='"Liberation Sans", sans-serif' text-anchor="start" stroke="#8a4ef2" stroke-width="0.35">для защиты, если выбрал</text>
<text x="1962.8" y="823.5999999999999" font-size="5.5" fill="#8a4ef2" font-weight="bold" font-family='"Liberation Sans", sans-serif' text-anchor="start" stroke="#8a4ef2" stroke-width="0.35">мафию и к мафии пришёл</text>
<text x="1962.8" y="832.0" font-size="5.5" fill="#8a4ef2" font-weight="bold" font-family='"Liberation Sans", sans-serif' text-anchor="start" stroke="#8a4ef2" stroke-width="0.35">комиссар, то комиссару</text>
<text x="1962.8" y="840.4" font-size="5.5" fill="#8a4ef2" font-weight="bold" font-family='"Liberation Sans", sans-serif' text-anchor="start" stroke="#8a4ef2" stroke-width="0.35">будет показано,</text>
<text x="1962.8" y="848.8" font-size="5.5" fill="#8a4ef2" font-weight="bold" font-family='"Liberation Sans", sans-serif' text-anchor="start" stroke="#8a4ef2" stroke-width="0.35">что это мирный житель,</text>
<text x="1962.8" y="857.1999999999999" font-size="5.5" fill="#8a4ef2" font-weight="bold" font-family='"Liberation Sans", sans-serif' text-anchor="start" stroke="#8a4ef2" stroke-width="0.35">так же спасает активного</text>
<text x="1962.8" y="865.5999999999999" font-size="5.5" fill="#8a4ef2" font-weight="bold" font-family='"Liberation Sans", sans-serif' text-anchor="start" stroke="#8a4ef2" stroke-width="0.35">игрока от хакера</text>
<line x1="1962.5" y1="875.6999999999999" x2="2044.7" y2="875.6999999999999" stroke="#8a4ef2" stroke-width="1.5"/>
<text x="1963.0" y="882.6" font-size="5.6" fill="#8a4ef2" font-weight="bold" font-family='"Liberation Sans", sans-serif' text-anchor="start" stroke="#8a4ef2" stroke-width="0.35">от 18 игроков</text>
<rect x="2060.3" y="769.6" width="97.2" height="122.5" rx="3" fill="none" stroke="#8a4ef2" stroke-width="1.5"/>
<rect x="2067.8" y="777.4" width="82.2" height="107.0" rx="0" fill="none" stroke="#8a4ef2" stroke-width="1.5"/>
<rect x="2067.8" y="777.4" width="16" height="15.4" rx="0" fill="none" stroke="#8a4ef2" stroke-width="1.5"/>
<line x1="2067.8" y1="796.9" x2="2150.0" y2="796.9" stroke="#8a4ef2" stroke-width="1.5"/>
<text x="2086.3" y="790.1999999999999" font-size="7.5" fill="#8a4ef2" font-weight="bold" font-family='"Liberation Sans", sans-serif' text-anchor="start" stroke="#8a4ef2" stroke-width="0.25">Клоун</text>
<line x1="2067.8" y1="878.8" x2="2150.0" y2="878.8" stroke="#8a4ef2" stroke-width="1.5"/>
<text x="2068.1000000000004" y="806.8" font-size="5.5" fill="#8a4ef2" font-weight="bold" font-family='"Liberation Sans", sans-serif' text-anchor="start" stroke="#8a4ef2" stroke-width="0.35">Может ночью поменять</text>
<text x="2068.1000000000004" y="815.1999999999999" font-size="5.5" fill="#8a4ef2" font-weight="bold" font-family='"Liberation Sans", sans-serif' text-anchor="start" stroke="#8a4ef2" stroke-width="0.35">местами роли двух игроков,</text>
<text x="2068.1000000000004" y="823.5999999999999" font-size="5.5" fill="#8a4ef2" font-weight="bold" font-family='"Liberation Sans", sans-serif' text-anchor="start" stroke="#8a4ef2" stroke-width="0.35">в том числе себя с кем-то.</text>
<text x="2068.1000000000004" y="832.0" font-size="5.5" fill="#8a4ef2" font-weight="bold" font-family='"Liberation Sans", sans-serif' text-anchor="start" stroke="#8a4ef2" stroke-width="0.35">Игрок может поменять роль</text>
<text x="2068.1000000000004" y="840.4" font-size="5.5" fill="#8a4ef2" font-weight="bold" font-family='"Liberation Sans", sans-serif' text-anchor="start" stroke="#8a4ef2" stroke-width="0.35">только 1 раз за игру.</text>
<text x="2068.1000000000004" y="848.8" font-size="5.5" fill="#8a4ef2" font-weight="bold" font-family='"Liberation Sans", sans-serif' text-anchor="start" stroke="#8a4ef2" stroke-width="0.35">Если он менял себя с кем-то,</text>
<text x="2068.1000000000004" y="857.1999999999999" font-size="5.5" fill="#8a4ef2" font-weight="bold" font-family='"Liberation Sans", sans-serif' text-anchor="start" stroke="#8a4ef2" stroke-width="0.35">то в следующую ночь новый</text>
<text x="2068.1000000000004" y="865.5999999999999" font-size="5.5" fill="#8a4ef2" font-weight="bold" font-family='"Liberation Sans", sans-serif' text-anchor="start" stroke="#8a4ef2" stroke-width="0.35">клоун может</text>
<text x="2068.1000000000004" y="874.0" font-size="5.5" fill="#8a4ef2" font-weight="bold" font-family='"Liberation Sans", sans-serif' text-anchor="start" stroke="#8a4ef2" stroke-width="0.35">воспользоваться ролью</text>
<line x1="2067.8" y1="875.6999999999999" x2="2150.0" y2="875.6999999999999" stroke="#8a4ef2" stroke-width="1.5"/>
<text x="2068.3" y="882.6" font-size="5.6" fill="#8a4ef2" font-weight="bold" font-family='"Liberation Sans", sans-serif' text-anchor="start" stroke="#8a4ef2" stroke-width="0.35">от 20 игроков</text>
<rect x="1849.7" y="970.2" width="413" height="163.2" rx="0" fill="none" stroke="#cfcfcf" stroke-width="1.5"/>
<rect x="1849.7" y="970.2" width="203" height="22.7" rx="0" fill="none" stroke="#cfcfcf" stroke-width="1.5"/>
<text x="1850.5" y="987.8" font-size="16" fill="#3a3a3a" font-weight="bold" font-family='"Liberation Serif", serif' text-anchor="start" stroke="#dcdcdc" stroke-width="0.85">ВОПРОС — ОТВЕТ</text>
<rect x="1849.7" y="1000.3" width="307.9" height="133.1" rx="0" fill="none" stroke="#8a4ef2" stroke-width="1.5"/>
<line x1="1849.7" y1="1008.1" x2="2157.6" y2="1008.1" stroke="#8a4ef2" stroke-width="1.5"/>
<line x1="1849.7" y1="1019.7" x2="2157.6" y2="1019.7" stroke="#8a4ef2" stroke-width="1.5"/>
<line x1="1849.7" y1="1044.5" x2="2157.6" y2="1044.5" stroke="#8a4ef2" stroke-width="1.5"/>
<line x1="1849.7" y1="1051.9" x2="2157.6" y2="1051.9" stroke="#8a4ef2" stroke-width="1.5"/>
<line x1="1849.7" y1="1059.8" x2="2157.6" y2="1059.8" stroke="#8a4ef2" stroke-width="1.5"/>
<line x1="1849.7" y1="1071.5" x2="2157.6" y2="1071.5" stroke="#8a4ef2" stroke-width="1.5"/>
<line x1="1849.7" y1="1079.2" x2="2157.6" y2="1079.2" stroke="#8a4ef2" stroke-width="1.5"/>
<line x1="1849.7" y1="1087" x2="2157.6" y2="1087" stroke="#8a4ef2" stroke-width="1.5"/>
<line x1="1849.7" y1="1098.7" x2="2157.6" y2="1098.7" stroke="#8a4ef2" stroke-width="1.5"/>
<line x1="1849.7" y1="1106.4" x2="2157.6" y2="1106.4" stroke="#8a4ef2" stroke-width="1.5"/>
<line x1="1849.7" y1="1114" x2="2157.6" y2="1114" stroke="#8a4ef2" stroke-width="1.5"/>
<line x1="1849.7" y1="1125.8" x2="2157.6" y2="1125.8" stroke="#8a4ef2" stroke-width="1.5"/>
<text x="1850.5" y="1016" font-size="5.6" fill="#8a4ef2" font-weight="bold" font-family='"Liberation Sans", sans-serif' text-anchor="start" stroke="#8a4ef2" stroke-width="0.3">Какое минимальное и максимальное количество игроков?</text>
<circle cx="2151.5" cy="1014" r="3.65" fill="none" stroke="#8a4ef2" stroke-width="3.6"/>
<text x="1850.5" y="1067.7" font-size="5.6" fill="#8a4ef2" font-weight="bold" font-family='"Liberation Sans", sans-serif' text-anchor="start" stroke="#8a4ef2" stroke-width="0.3">Могу ли я играть только в мобильной версии или на компьютере тоже?</text>
<circle cx="2151.5" cy="1065.7" r="3.65" fill="none" stroke="#8a4ef2" stroke-width="3.6"/>
<text x="1850.5" y="1094.7" font-size="5.6" fill="#8a4ef2" font-weight="bold" font-family='"Liberation Sans", sans-serif' text-anchor="start" stroke="#8a4ef2" stroke-width="0.3">Могу ли я отвлекаться от игры и отвечать на сообщения?</text>
<circle cx="2151.5" cy="1092.7" r="3.65" fill="none" stroke="#8a4ef2" stroke-width="3.6"/>
<text x="1850.5" y="1121.9" font-size="5.6" fill="#8a4ef2" font-weight="bold" font-family='"Liberation Sans", sans-serif' text-anchor="start" stroke="#8a4ef2" stroke-width="0.3">Как долго может длиться одна игра?</text>
<circle cx="2151.5" cy="1119.9" r="3.65" fill="none" stroke="#8a4ef2" stroke-width="3.6"/>
<text x="1850.5" y="1034" font-size="5.6" fill="#8a4ef2" font-weight="bold" font-family='"Liberation Sans", sans-serif' text-anchor="start" stroke="#8a4ef2" stroke-width="0.3">Начать любую игру можно от трех игроков, но игра будет интереснее, если участников будет хотя бы</text>
<text x="1850.5" y="1042" font-size="5.6" fill="#8a4ef2" font-weight="bold" font-family='"Liberation Sans", sans-serif' text-anchor="start" stroke="#8a4ef2" stroke-width="0.3">от 7 человек.</text>
<rect x="1849.7" y="1204.8" width="413.3" height="80" rx="0" fill="none" stroke="#cfcfcf" stroke-width="1.5"/>
<line x1="1849.7" y1="1238.9" x2="2263" y2="1238.9" stroke="#cfcfcf" stroke-width="1.5"/>
<text x="1851" y="1222.2" font-size="16" fill="#3a3a3a" font-weight="bold" font-family='"Liberation Serif", serif' text-anchor="start" stroke="#dcdcdc" stroke-width="0.85">ВЕРСИИ</text>
<rect x="1849.7" y="1239.7" width="203" height="60" rx="0" fill="none" stroke="#cfcfcf" stroke-width="1.5"/>
<rect x="2059.8" y="1239.7" width="203.2" height="60" rx="0" fill="none" stroke="#cfcfcf" stroke-width="1.5"/>
<text x="1857.7" y="1254" font-size="7.2" fill="#eeeeee" font-weight="bold" font-family='"Liberation Sans", sans-serif' text-anchor="start" >Бесплатная версия</text>
<text x="2067.5" y="1254" font-size="7.2" fill="#eeeeee" font-weight="bold" font-family='"Liberation Sans", sans-serif' text-anchor="start" >Премиум версия</text>
<rect x="2115.3" y="1242.3" width="137.2" height="8.5" rx="4.25" fill="#1f1f1f" stroke="#7a7a7a" stroke-width="1"/>
<line x1="2339.5" y1="340" x2="2339.5" y2="1260" stroke="#cfcfcf" stroke-width="1.5"/>
<line x1="2476.5" y1="340" x2="2476.5" y2="1260" stroke="#cfcfcf" stroke-width="1.5"/>
<line x1="2339.5" y1="441.3" x2="2476.5" y2="441.3" stroke="#cfcfcf" stroke-width="1.5"/>
<rect x="2346.8" y="300" width="122.3" height="118.4" rx="2" fill="none" stroke="#cfcfcf" stroke-width="1.5"/>
<text x="2354.8" y="359.0" font-size="5.0" fill="#e8e8e8" font-weight="bold" font-family='"Liberation Sans", sans-serif' text-anchor="start" stroke="#e8e8e8" stroke-width="0.3">Процедура ... процедура</text>
<text x="2354.8" y="366.2" font-size="5.0" fill="#e8e8e8" font-weight="bold" font-family='"Liberation Sans", sans-serif' text-anchor="start" stroke="#e8e8e8" stroke-width="0.3">подтверждения ликвидации. Живые</text>
<text x="2354.8" y="373.4" font-size="5.0" fill="#e8e8e8" font-weight="bold" font-family='"Liberation Sans", sans-serif' text-anchor="start" stroke="#e8e8e8" stroke-width="0.3">игроки должны согласиться</text>
<text x="2354.8" y="380.6" font-size="5.0" fill="#e8e8e8" font-weight="bold" font-family='"Liberation Sans", sans-serif' text-anchor="start" stroke="#e8e8e8" stroke-width="0.3">или опровергнуть решение. В случае,</text>
<text x="2354.8" y="387.8" font-size="5.0" fill="#e8e8e8" font-weight="bold" font-family='"Liberation Sans", sans-serif' text-anchor="start" stroke="#e8e8e8" stroke-width="0.3">если большинство голосует «за»,</text>
<text x="2354.8" y="395.0" font-size="5.0" fill="#e8e8e8" font-weight="bold" font-family='"Liberation Sans", sans-serif' text-anchor="start" stroke="#e8e8e8" stroke-width="0.3">выбранный победитель голосования</text>
<text x="2354.8" y="402.2" font-size="5.0" fill="#e8e8e8" font-weight="bold" font-family='"Liberation Sans", sans-serif' text-anchor="start" stroke="#e8e8e8" stroke-width="0.3">погибает. После этого наступает ночь</text>
<text x="2354.8" y="409.4" font-size="5.0" fill="#e8e8e8" font-weight="bold" font-family='"Liberation Sans", sans-serif' text-anchor="start" stroke="#e8e8e8" stroke-width="0.3">снова.</text>
<rect x="2346.5" y="463.8" width="123" height="12.5" rx="0" fill="none" stroke="#cfcfcf" stroke-width="1.5"/>
<line x1="2346.5" y1="476.3" x2="2346.5" y2="1260" stroke="#cfcfcf" stroke-width="1.5"/>
<line x1="2469.5" y1="476.3" x2="2469.5" y2="1260" stroke="#cfcfcf" stroke-width="1.5"/>
<text x="2347.5" y="474.8" font-size="11" fill="#3a3a3a" font-weight="bold" font-family='"Liberation Serif", serif' text-anchor="start" stroke="#dcdcdc" stroke-width="0.85">РОЛИ В ИГРЕ</text>
<rect x="2346.8" y="484.1" width="122.3" height="60.900000000000006" rx="3.5" fill="none" stroke="#8a4ef2" stroke-width="1.5"/>
<rect x="2354.1000000000004" y="491.5" width="107.7" height="46.2" rx="0" fill="none" stroke="#8a4ef2" stroke-width="1.5"/>
<rect x="2354.1000000000004" y="491.5" width="15.3" height="15.5" rx="0" fill="none" stroke="#8a4ef2" stroke-width="1.5"/>
<line x1="2354.1000000000004" y1="510.0" x2="2461.8" y2="510.0" stroke="#8a4ef2" stroke-width="1.5"/>
<text x="2372.6000000000004" y="505.1" font-size="6.7" fill="#8a4ef2" font-weight="bold" font-family='"Liberation Sans", sans-serif' text-anchor="start" stroke="#8a4ef2" stroke-width="0.25">Мирный житель</text>
<text x="2354.4000000000005" y="519.0" font-size="4.9" fill="#8a4ef2" font-weight="bold" font-family='"Liberation Sans", sans-serif' text-anchor="start" stroke="#8a4ef2" stroke-width="0.35">Ничего не делает, спит ночью, голосует</text>
<text x="2354.4000000000005" y="526.15" font-size="4.9" fill="#8a4ef2" font-weight="bold" font-family='"Liberation Sans", sans-serif' text-anchor="start" stroke="#8a4ef2" stroke-width="0.35">днем</text>
<line x1="2354.1000000000004" y1="530.8999999999999" x2="2461.8" y2="530.8999999999999" stroke="#8a4ef2" stroke-width="1.5"/>
<text x="2354.6000000000004" y="535.9000000000001" font-size="5.0" fill="#8a4ef2" font-weight="bold" font-family='"Liberation Sans", sans-serif' text-anchor="start" stroke="#8a4ef2" stroke-width="0.35">от 3 игроков</text>
<rect x="2346.8" y="553.2" width="122.3" height="60.900000000000006" rx="3.5" fill="none" stroke="#8a4ef2" stroke-width="1.5"/>
<rect x="2354.1000000000004" y="560.6" width="107.7" height="46.2" rx="0" fill="none" stroke="#8a4ef2" stroke-width="1.5"/>
<rect x="2354.1000000000004" y="560.6" width="15.3" height="15.5" rx="0" fill="none" stroke="#8a4ef2" stroke-width="1.5"/>
<line x1="2354.1000000000004" y1="579.1" x2="2461.8" y2="579.1" stroke="#8a4ef2" stroke-width="1.5"/>
<text x="2372.6000000000004" y="574.2" font-size="6.7" fill="#8a4ef2" font-weight="bold" font-family='"Liberation Sans", sans-serif' text-anchor="start" stroke="#8a4ef2" stroke-width="0.25">Дон</text>
<text x="2354.4000000000005" y="588.1" font-size="4.9" fill="#8a4ef2" font-weight="bold" font-family='"Liberation Sans", sans-serif' text-anchor="start" stroke="#8a4ef2" stroke-width="0.35">Глава мафии, именно он выбирает кого</text>
<text x="2354.4000000000005" y="595.25" font-size="4.9" fill="#8a4ef2" font-weight="bold" font-family='"Liberation Sans", sans-serif' text-anchor="start" stroke="#8a4ef2" stroke-width="0.35">убивать</text>
<line x1="2354.1000000000004" y1="599.9999999999999" x2="2461.8" y2="599.9999999999999" stroke="#8a4ef2" stroke-width="1.5"/>
<text x="2354.6000000000004" y="605.0000000000001" font-size="5.0" fill="#8a4ef2" font-weight="bold" font-family='"Liberation Sans", sans-serif' text-anchor="start" stroke="#8a4ef2" stroke-width="0.35">от 3 игроков</text>
<rect x="2346.8" y="622.4" width="122.3" height="75.2" rx="3.5" fill="none" stroke="#8a4ef2" stroke-width="1.5"/>
<rect x="2354.1000000000004" y="629.8" width="107.7" height="60.5" rx="0" fill="none" stroke="#8a4ef2" stroke-width="1.5"/>
<rect x="2354.1000000000004" y="629.8" width="15.3" height="15.5" rx="0" fill="none" stroke="#8a4ef2" stroke-width="1.5"/>
<line x1="2354.1000000000004" y1="648.3" x2="2461.8" y2="648.3" stroke="#8a4ef2" stroke-width="1.5"/>
<text x="2372.6000000000004" y="643.4" font-size="6.7" fill="#8a4ef2" font-weight="bold" font-family='"Liberation Sans", sans-serif' text-anchor="start" stroke="#8a4ef2" stroke-width="0.25">Мафия</text>
<text x="2354.4000000000005" y="657.3" font-size="4.9" fill="#8a4ef2" font-weight="bold" font-family='"Liberation Sans", sans-serif' text-anchor="start" stroke="#8a4ef2" stroke-width="0.35">Сообщник Дона, если Дон спит,</text>
<text x="2354.4000000000005" y="664.4499999999999" font-size="4.9" fill="#8a4ef2" font-weight="bold" font-family='"Liberation Sans", sans-serif' text-anchor="start" stroke="#8a4ef2" stroke-width="0.35">то жертвой будет выбор мафии,</text>
<text x="2354.4000000000005" y="671.5999999999999" font-size="4.9" fill="#8a4ef2" font-weight="bold" font-family='"Liberation Sans", sans-serif' text-anchor="start" stroke="#8a4ef2" stroke-width="0.35">после смерти Дона один из мафии</text>
<text x="2354.4000000000005" y="678.75" font-size="4.9" fill="#8a4ef2" font-weight="bold" font-family='"Liberation Sans", sans-serif' text-anchor="start" stroke="#8a4ef2" stroke-width="0.35">становится новым Доном</text>
<line x1="2354.1000000000004" y1="683.4999999999999" x2="2461.8" y2="683.4999999999999" stroke="#8a4ef2" stroke-width="1.5"/>
<text x="2354.6000000000004" y="688.5" font-size="5.0" fill="#8a4ef2" font-weight="bold" font-family='"Liberation Sans", sans-serif' text-anchor="start" stroke="#8a4ef2" stroke-width="0.35">от 3 игроков</text>
<rect x="2346.8" y="706.6" width="122.3" height="82.35" rx="3.5" fill="none" stroke="#8a4ef2" stroke-width="1.5"/>
<rect x="2354.1000000000004" y="714.0" width="107.7" height="67.64999999999999" rx="0" fill="none" stroke="#8a4ef2" stroke-width="1.5"/>
<rect x="2354.1000000000004" y="714.0" width="15.3" height="15.5" rx="0" fill="none" stroke="#8a4ef2" stroke-width="1.5"/>
<line x1="2354.1000000000004" y1="732.5" x2="2461.8" y2="732.5" stroke="#8a4ef2" stroke-width="1.5"/>
<text x="2372.6000000000004" y="727.6" font-size="6.7" fill="#8a4ef2" font-weight="bold" font-family='"Liberation Sans", sans-serif' text-anchor="start" stroke="#8a4ef2" stroke-width="0.25">Доктор</text>
<text x="2354.4000000000005" y="741.5" font-size="4.9" fill="#8a4ef2" font-weight="bold" font-family='"Liberation Sans", sans-serif' text-anchor="start" stroke="#8a4ef2" stroke-width="0.35">Выбирает игрока, которого хочет</text>
<text x="2354.4000000000005" y="748.65" font-size="4.9" fill="#8a4ef2" font-weight="bold" font-family='"Liberation Sans", sans-serif' text-anchor="start" stroke="#8a4ef2" stroke-width="0.35">вылечить, спасает этого игрока</text>
<text x="2354.4000000000005" y="755.8" font-size="4.9" fill="#8a4ef2" font-weight="bold" font-family='"Liberation Sans", sans-serif' text-anchor="start" stroke="#8a4ef2" stroke-width="0.35">от убийства и от заражения любовницей</text>
<text x="2354.4000000000005" y="762.95" font-size="4.9" fill="#8a4ef2" font-weight="bold" font-family='"Liberation Sans", sans-serif' text-anchor="start" stroke="#8a4ef2" stroke-width="0.35">ночью, себя может лечить только</text>
<text x="2354.4000000000005" y="770.1" font-size="4.9" fill="#8a4ef2" font-weight="bold" font-family='"Liberation Sans", sans-serif' text-anchor="start" stroke="#8a4ef2" stroke-width="0.35">1 раз за игру</text>
<line x1="2354.1000000000004" y1="774.8499999999999" x2="2461.8" y2="774.8499999999999" stroke="#8a4ef2" stroke-width="1.5"/>
<text x="2354.6000000000004" y="779.85" font-size="5.0" fill="#8a4ef2" font-weight="bold" font-family='"Liberation Sans", sans-serif' text-anchor="start" stroke="#8a4ef2" stroke-width="0.35">от 3 игроков</text>
<rect x="2346.8" y="797.7" width="122.3" height="60.900000000000006" rx="3.5" fill="none" stroke="#8a4ef2" stroke-width="1.5"/>
<rect x="2354.1000000000004" y="805.1" width="107.7" height="46.2" rx="0" fill="none" stroke="#8a4ef2" stroke-width="1.5"/>
<rect x="2354.1000000000004" y="805.1" width="15.3" height="15.5" rx="0" fill="none" stroke="#8a4ef2" stroke-width="1.5"/>
<line x1="2354.1000000000004" y1="823.6" x2="2461.8" y2="823.6" stroke="#8a4ef2" stroke-width="1.5"/>
<text x="2372.6000000000004" y="818.7" font-size="6.7" fill="#8a4ef2" font-weight="bold" font-family='"Liberation Sans", sans-serif' text-anchor="start" stroke="#8a4ef2" stroke-width="0.25">Комиссар Росси</text>
<text x="2354.4000000000005" y="832.6" font-size="4.9" fill="#8a4ef2" font-weight="bold" font-family='"Liberation Sans", sans-serif' text-anchor="start" stroke="#8a4ef2" stroke-width="0.35">Ночью может проверить игрока и узнать</text>
<text x="2354.4000000000005" y="839.75" font-size="4.9" fill="#8a4ef2" font-weight="bold" font-family='"Liberation Sans", sans-serif' text-anchor="start" stroke="#8a4ef2" stroke-width="0.35">его роль или убить кого-то</text>
<line x1="2354.1000000000004" y1="844.4999999999999" x2="2461.8" y2="844.4999999999999" stroke="#8a4ef2" stroke-width="1.5"/>
<text x="2354.6000000000004" y="849.5000000000001" font-size="5.0" fill="#8a4ef2" font-weight="bold" font-family='"Liberation Sans", sans-serif' text-anchor="start" stroke="#8a4ef2" stroke-width="0.35">от 6 игроков</text>
<rect x="2346.8" y="866.8" width="122.3" height="60.900000000000006" rx="3.5" fill="none" stroke="#8a4ef2" stroke-width="1.5"/>
<rect x="2354.1000000000004" y="874.1999999999999" width="107.7" height="46.2" rx="0" fill="none" stroke="#8a4ef2" stroke-width="1.5"/>
<rect x="2354.1000000000004" y="874.1999999999999" width="15.3" height="15.5" rx="0" fill="none" stroke="#8a4ef2" stroke-width="1.5"/>
<line x1="2354.1000000000004" y1="892.6999999999999" x2="2461.8" y2="892.6999999999999" stroke="#8a4ef2" stroke-width="1.5"/>
<text x="2372.6000000000004" y="887.8" font-size="6.7" fill="#8a4ef2" font-weight="bold" font-family='"Liberation Sans", sans-serif' text-anchor="start" stroke="#8a4ef2" stroke-width="0.25">Самоубийца</text>
<text x="2354.4000000000005" y="901.6999999999999" font-size="4.9" fill="#8a4ef2" font-weight="bold" font-family='"Liberation Sans", sans-serif' text-anchor="start" stroke="#8a4ef2" stroke-width="0.35">Для победы нужно умереть на дневном</text>
<text x="2354.4000000000005" y="908.8499999999999" font-size="4.9" fill="#8a4ef2" font-weight="bold" font-family='"Liberation Sans", sans-serif' text-anchor="start" stroke="#8a4ef2" stroke-width="0.35">голосовании&quot;</text>
<line x1="2354.1000000000004" y1="913.5999999999998" x2="2461.8" y2="913.5999999999998" stroke="#8a4ef2" stroke-width="1.5"/>
<text x="2354.6000000000004" y="918.6" font-size="5.0" fill="#8a4ef2" font-weight="bold" font-family='"Liberation Sans", sans-serif' text-anchor="start" stroke="#8a4ef2" stroke-width="0.35">от 8 игроков</text>
<rect x="2346.8" y="936" width="122.3" height="60.900000000000006" rx="3.5" fill="none" stroke="#8a4ef2" stroke-width="1.5"/>
<rect x="2354.1000000000004" y="943.4" width="107.7" height="46.2" rx="0" fill="none" stroke="#8a4ef2" stroke-width="1.5"/>
<rect x="2354.1000000000004" y="943.4" width="15.3" height="15.5" rx="0" fill="none" stroke="#8a4ef2" stroke-width="1.5"/>
<line x1="2354.1000000000004" y1="961.9" x2="2461.8" y2="961.9" stroke="#8a4ef2" stroke-width="1.5"/>
<text x="2372.6000000000004" y="957.0" font-size="6.7" fill="#8a4ef2" font-weight="bold" font-family='"Liberation Sans", sans-serif' text-anchor="start" stroke="#8a4ef2" stroke-width="0.25">Бомж</text>
<text x="2354.4000000000005" y="970.9" font-size="4.9" fill="#8a4ef2" font-weight="bold" font-family='"Liberation Sans", sans-serif' text-anchor="start" stroke="#8a4ef2" stroke-width="0.35">Ночью ходит к игрокам и видит всех,</text>
<text x="2354.4000000000005" y="978.05" font-size="4.9" fill="#8a4ef2" font-weight="bold" font-family='"Liberation Sans", sans-serif' text-anchor="start" stroke="#8a4ef2" stroke-width="0.35">кто посещал этого игрока</text>
<line x1="2354.1000000000004" y1="982.7999999999998" x2="2461.8" y2="982.7999999999998" stroke="#8a4ef2" stroke-width="1.5"/>
<text x="2354.6000000000004" y="987.8000000000001" font-size="5.0" fill="#8a4ef2" font-weight="bold" font-family='"Liberation Sans", sans-serif' text-anchor="start" stroke="#8a4ef2" stroke-width="0.35">от 10 игроков</text>
<rect x="2346.8" y="1005.4" width="122.3" height="82.35" rx="3.5" fill="none" stroke="#8a4ef2" stroke-width="1.5"/>
<rect x="2354.1000000000004" y="1012.8" width="107.7" height="67.64999999999999" rx="0" fill="none" stroke="#8a4ef2" stroke-width="1.5"/>
<rect x="2354.1000000000004" y="1012.8" width="15.3" height="15.5" rx="0" fill="none" stroke="#8a4ef2" stroke-width="1.5"/>
<line x1="2354.1000000000004" y1="1031.3" x2="2461.8" y2="1031.3" stroke="#8a4ef2" stroke-width="1.5"/>
<text x="2372.6000000000004" y="1026.3999999999999" font-size="6.7" fill="#8a4ef2" font-weight="bold" font-family='"Liberation Sans", sans-serif' text-anchor="start" stroke="#8a4ef2" stroke-width="0.25">Любовница</text>
<text x="2354.4000000000005" y="1040.3" font-size="4.9" fill="#8a4ef2" font-weight="bold" font-family='"Liberation Sans", sans-serif' text-anchor="start" stroke="#8a4ef2" stroke-width="0.35">Проводит ночь с игроком, ход этого</text>
<text x="2354.4000000000005" y="1047.45" font-size="4.9" fill="#8a4ef2" font-weight="bold" font-family='"Liberation Sans", sans-serif' text-anchor="start" stroke="#8a4ef2" stroke-width="0.35">игрока ночью отменяется, если игрока не</text>
<text x="2354.4000000000005" y="1054.6" font-size="4.9" fill="#8a4ef2" font-weight="bold" font-family='"Liberation Sans", sans-serif' text-anchor="start" stroke="#8a4ef2" stroke-width="0.35">посещал доктор, то днём он лечится и не</text>
<text x="2354.4000000000005" y="1061.75" font-size="4.9" fill="#8a4ef2" font-weight="bold" font-family='"Liberation Sans", sans-serif' text-anchor="start" stroke="#8a4ef2" stroke-width="0.35">может ничего писать в чат и участвовать в</text>
<text x="2354.4000000000005" y="1068.8999999999999" font-size="4.9" fill="#8a4ef2" font-weight="bold" font-family='"Liberation Sans", sans-serif' text-anchor="start" stroke="#8a4ef2" stroke-width="0.35">голосовании</text>
<line x1="2354.1000000000004" y1="1073.6499999999999" x2="2461.8" y2="1073.6499999999999" stroke="#8a4ef2" stroke-width="1.5"/>
<text x="2354.6000000000004" y="1078.65" font-size="5.0" fill="#8a4ef2" font-weight="bold" font-family='"Liberation Sans", sans-serif' text-anchor="start" stroke="#8a4ef2" stroke-width="0.35">от 12 игроков</text>
<rect x="2346.8" y="1096.3" width="122.3" height="68.05000000000001" rx="3.5" fill="none" stroke="#8a4ef2" stroke-width="1.5"/>
<rect x="2354.1000000000004" y="1103.7" width="107.7" height="53.35000000000001" rx="0" fill="none" stroke="#8a4ef2" stroke-width="1.5"/>
<rect x="2354.1000000000004" y="1103.7" width="15.3" height="15.5" rx="0" fill="none" stroke="#8a4ef2" stroke-width="1.5"/>
<line x1="2354.1000000000004" y1="1122.2" x2="2461.8" y2="1122.2" stroke="#8a4ef2" stroke-width="1.5"/>
<text x="2372.6000000000004" y="1117.3" font-size="6.7" fill="#8a4ef2" font-weight="bold" font-family='"Liberation Sans", sans-serif' text-anchor="start" stroke="#8a4ef2" stroke-width="0.25">Хакер</text>
<text x="2354.4000000000005" y="1131.2" font-size="4.9" fill="#8a4ef2" font-weight="bold" font-family='"Liberation Sans", sans-serif' text-anchor="start" stroke="#8a4ef2" stroke-width="0.35">Играет за мафию, взламывает ПК игроков</text>
<text x="2354.4000000000005" y="1138.3500000000001" font-size="4.9" fill="#8a4ef2" font-weight="bold" font-family='"Liberation Sans", sans-serif' text-anchor="start" stroke="#8a4ef2" stroke-width="0.35">и узнает их роли, все мафиози будут</text>
<text x="2354.4000000000005" y="1145.5" font-size="4.9" fill="#8a4ef2" font-weight="bold" font-family='"Liberation Sans", sans-serif' text-anchor="start" stroke="#8a4ef2" stroke-width="0.35">видеть роль этого игрока</text>
<line x1="2354.1000000000004" y1="1150.25" x2="2461.8" y2="1150.25" stroke="#8a4ef2" stroke-width="1.5"/>
<text x="2354.6000000000004" y="1155.25" font-size="5.0" fill="#8a4ef2" font-weight="bold" font-family='"Liberation Sans", sans-serif' text-anchor="start" stroke="#8a4ef2" stroke-width="0.35">от 12 игроков</text>
<rect x="2346.8" y="1172.9" width="122.3" height="68.05000000000001" rx="3.5" fill="none" stroke="#8a4ef2" stroke-width="1.5"/>
<rect x="2354.1000000000004" y="1180.3000000000002" width="107.7" height="53.35000000000001" rx="0" fill="none" stroke="#8a4ef2" stroke-width="1.5"/>
<rect x="2354.1000000000004" y="1180.3000000000002" width="15.3" height="15.5" rx="0" fill="none" stroke="#8a4ef2" stroke-width="1.5"/>
<line x1="2354.1000000000004" y1="1198.8000000000002" x2="2461.8" y2="1198.8000000000002" stroke="#8a4ef2" stroke-width="1.5"/>
<text x="2372.6000000000004" y="1193.9" font-size="6.7" fill="#8a4ef2" font-weight="bold" font-family='"Liberation Sans", sans-serif' text-anchor="start" stroke="#8a4ef2" stroke-width="0.25">Камикадзе</text>
<text x="2354.4000000000005" y="1207.8000000000002" font-size="4.9" fill="#8a4ef2" font-weight="bold" font-family='"Liberation Sans", sans-serif' text-anchor="start" stroke="#8a4ef2" stroke-width="0.35">Почти как мирный житель, но если его</text>
<text x="2354.4000000000005" y="1214.9500000000003" font-size="4.9" fill="#8a4ef2" font-weight="bold" font-family='"Liberation Sans", sans-serif' text-anchor="start" stroke="#8a4ef2" stroke-width="0.35">повесят, то может с собой забрать одного</text>
<text x="2354.4000000000005" y="1222.1000000000001" font-size="4.9" fill="#8a4ef2" font-weight="bold" font-family='"Liberation Sans", sans-serif' text-anchor="start" stroke="#8a4ef2" stroke-width="0.35">игрока</text>
<line x1="2354.1000000000004" y1="1226.8500000000001" x2="2461.8" y2="1226.8500000000001" stroke="#8a4ef2" stroke-width="1.5"/>
<text x="2354.6000000000004" y="1231.8500000000001" font-size="5.0" fill="#8a4ef2" font-weight="bold" font-family='"Liberation Sans", sans-serif' text-anchor="start" stroke="#8a4ef2" stroke-width="0.35">от 14 игроков</text>
<rect x="2346.8" y="1249.8" width="122.3" height="68.05000000000001" rx="3.5" fill="none" stroke="#8a4ef2" stroke-width="1.5"/>
<rect x="2354.1000000000004" y="1257.2" width="107.7" height="53.35000000000001" rx="0" fill="none" stroke="#8a4ef2" stroke-width="1.5"/>
<rect x="2354.1000000000004" y="1257.2" width="15.3" height="15.5" rx="0" fill="none" stroke="#8a4ef2" stroke-width="1.5"/>
<line x1="2354.1000000000004" y1="1275.7" x2="2461.8" y2="1275.7" stroke="#8a4ef2" stroke-width="1.5"/>
<text x="2372.6000000000004" y="1270.8" font-size="6.7" fill="#8a4ef2" font-weight="bold" font-family='"Liberation Sans", sans-serif' text-anchor="start" stroke="#8a4ef2" stroke-width="0.25">Сержант</text>
<text x="2354.4000000000005" y="1284.7" font-size="4.9" fill="#8a4ef2" font-weight="bold" font-family='"Liberation Sans", sans-serif' text-anchor="start" stroke="#8a4ef2" stroke-width="0.35">Помощник комиссара, ничего не может</text>
<text x="2354.4000000000005" y="1291.8500000000001" font-size="4.9" fill="#8a4ef2" font-weight="bold" font-family='"Liberation Sans", sans-serif' text-anchor="start" stroke="#8a4ef2" stroke-width="0.35">делать ночью, но видит всех, к кому</text>
<text x="2354.4000000000005" y="1299.0" font-size="4.9" fill="#8a4ef2" font-weight="bold" font-family='"Liberation Sans", sans-serif' text-anchor="start" stroke="#8a4ef2" stroke-width="0.35">ходит комиссар.</text>
<line x1="2354.1000000000004" y1="1303.75" x2="2461.8" y2="1303.75" stroke="#8a4ef2" stroke-width="1.5"/>
<text x="2354.6000000000004" y="1308.75" font-size="5.0" fill="#8a4ef2" font-weight="bold" font-family='"Liberation Sans", sans-serif' text-anchor="start" stroke="#8a4ef2" stroke-width="0.35">от 15 игроков</text>
<line x1="2514.7" y1="340" x2="2514.7" y2="1260" stroke="#cfcfcf" stroke-width="1.5"/>
<line x1="2698.8" y1="340" x2="2698.8" y2="1260" stroke="#cfcfcf" stroke-width="1.5"/>
<rect x="2523" y="370.8" width="168.3" height="900" rx="0" fill="none" stroke="#cfcfcf" stroke-width="1.5"/>
<line x1="2523" y1="382.9" x2="2691.3" y2="382.9" stroke="#cfcfcf" stroke-width="1.5"/>
<text x="2524" y="381.5" font-size="11" fill="#3a3a3a" font-weight="bold" font-family='"Liberation Serif", serif' text-anchor="start" stroke="#dcdcdc" stroke-width="0.85">РОЛИ В ИГРЕ</text>
<rect x="2523" y="390.8" width="168.3" height="53.75" rx="3.5" fill="none" stroke="#8a4ef2" stroke-width="1.5"/>
<rect x="2530.3" y="398.2" width="153.70000000000002" height="39.05" rx="0" fill="none" stroke="#8a4ef2" stroke-width="1.5"/>
<rect x="2530.3" y="398.2" width="15.3" height="15.5" rx="0" fill="none" stroke="#8a4ef2" stroke-width="1.5"/>
<line x1="2530.3" y1="416.7" x2="2684.0" y2="416.7" stroke="#8a4ef2" stroke-width="1.5"/>
<text x="2548.8" y="411.8" font-size="6.7" fill="#8a4ef2" font-weight="bold" font-family='"Liberation Sans", sans-serif' text-anchor="start" stroke="#8a4ef2" stroke-width="0.25">Мирный житель</text>
<text x="2530.6000000000004" y="425.7" font-size="4.9" fill="#8a4ef2" font-weight="bold" font-family='"Liberation Sans", sans-serif' text-anchor="start" stroke="#8a4ef2" stroke-width="0.35">Ничего не делает, спит ночью, голосует днем</text>
<line x1="2530.3" y1="430.45" x2="2684.0" y2="430.45" stroke="#8a4ef2" stroke-width="1.5"/>
<text x="2530.8" y="435.45" font-size="5.0" fill="#8a4ef2" font-weight="bold" font-family='"Liberation Sans", sans-serif' text-anchor="start" stroke="#8a4ef2" stroke-width="0.35">от 3 игроков</text>
<rect x="2523" y="453" width="168.3" height="53.75" rx="3.5" fill="none" stroke="#8a4ef2" stroke-width="1.5"/>
<rect x="2530.3" y="460.4" width="153.70000000000002" height="39.05" rx="0" fill="none" stroke="#8a4ef2" stroke-width="1.5"/>
<rect x="2530.3" y="460.4" width="15.3" height="15.5" rx="0" fill="none" stroke="#8a4ef2" stroke-width="1.5"/>
<line x1="2530.3" y1="478.9" x2="2684.0" y2="478.9" stroke="#8a4ef2" stroke-width="1.5"/>
<text x="2548.8" y="474.0" font-size="6.7" fill="#8a4ef2" font-weight="bold" font-family='"Liberation Sans", sans-serif' text-anchor="start" stroke="#8a4ef2" stroke-width="0.25">Дон</text>
<text x="2530.6000000000004" y="487.9" font-size="4.9" fill="#8a4ef2" font-weight="bold" font-family='"Liberation Sans", sans-serif' text-anchor="start" stroke="#8a4ef2" stroke-width="0.35">Глава мафии, именно он выбирает кого убивать</text>
<line x1="2530.3" y1="492.65" x2="2684.0" y2="492.65" stroke="#8a4ef2" stroke-width="1.5"/>
<text x="2530.8" y="497.65" font-size="5.0" fill="#8a4ef2" font-weight="bold" font-family='"Liberation Sans", sans-serif' text-anchor="start" stroke="#8a4ef2" stroke-width="0.35">от 3 игроков</text>
<rect x="2523" y="514.3" width="168.3" height="68.05000000000001" rx="3.5" fill="none" stroke="#8a4ef2" stroke-width="1.5"/>
<rect x="2530.3" y="521.6999999999999" width="153.70000000000002" height="53.35000000000001" rx="0" fill="none" stroke="#8a4ef2" stroke-width="1.5"/>
<rect x="2530.3" y="521.6999999999999" width="15.3" height="15.5" rx="0" fill="none" stroke="#8a4ef2" stroke-width="1.5"/>
<line x1="2530.3" y1="540.1999999999999" x2="2684.0" y2="540.1999999999999" stroke="#8a4ef2" stroke-width="1.5"/>
<text x="2548.8" y="535.3" font-size="6.7" fill="#8a4ef2" font-weight="bold" font-family='"Liberation Sans", sans-serif' text-anchor="start" stroke="#8a4ef2" stroke-width="0.25">Мафия</text>
<text x="2530.6000000000004" y="549.1999999999999" font-size="4.9" fill="#8a4ef2" font-weight="bold" font-family='"Liberation Sans", sans-serif' text-anchor="start" stroke="#8a4ef2" stroke-width="0.35">Сообщник Дона, если Дон спит, то жертвой будет выбор</text>
<text x="2530.6000000000004" y="556.3499999999999" font-size="4.9" fill="#8a4ef2" font-weight="bold" font-family='"Liberation Sans", sans-serif' text-anchor="start" stroke="#8a4ef2" stroke-width="0.35">мафии, после смерти Дона один из мафии становится новым</text>
<text x="2530.6000000000004" y="563.4999999999999" font-size="4.9" fill="#8a4ef2" font-weight="bold" font-family='"Liberation Sans", sans-serif' text-anchor="start" stroke="#8a4ef2" stroke-width="0.35">Доном</text>
<line x1="2530.3" y1="568.2499999999999" x2="2684.0" y2="568.2499999999999" stroke="#8a4ef2" stroke-width="1.5"/>
<text x="2530.8" y="573.25" font-size="5.0" fill="#8a4ef2" font-weight="bold" font-family='"Liberation Sans", sans-serif' text-anchor="start" stroke="#8a4ef2" stroke-width="0.35">от 3 игроков</text>
<rect x="2523" y="591" width="168.3" height="68.05000000000001" rx="3.5" fill="none" stroke="#8a4ef2" stroke-width="1.5"/>
<rect x="2530.3" y="598.4" width="153.70000000000002" height="53.35000000000001" rx="0" fill="none" stroke="#8a4ef2" stroke-width="1.5"/>
<rect x="2530.3" y="598.4" width="15.3" height="15.5" rx="0" fill="none" stroke="#8a4ef2" stroke-width="1.5"/>
<line x1="2530.3" y1="616.9" x2="2684.0" y2="616.9" stroke="#8a4ef2" stroke-width="1.5"/>
<text x="2548.8" y="612.0" font-size="6.7" fill="#8a4ef2" font-weight="bold" font-family='"Liberation Sans", sans-serif' text-anchor="start" stroke="#8a4ef2" stroke-width="0.25">Доктор</text>
<text x="2530.6000000000004" y="625.9" font-size="4.9" fill="#8a4ef2" font-weight="bold" font-family='"Liberation Sans", sans-serif' text-anchor="start" stroke="#8a4ef2" stroke-width="0.35">Выбирает игрока, которого хочет вылечить, спасает этого</text>
<text x="2530.6000000000004" y="633.05" font-size="4.9" fill="#8a4ef2" font-weight="bold" font-family='"Liberation Sans", sans-serif' text-anchor="start" stroke="#8a4ef2" stroke-width="0.35">игрока от убийства и от заражения любовницей ночью, себя</text>
<text x="2530.6000000000004" y="640.1999999999999" font-size="4.9" fill="#8a4ef2" font-weight="bold" font-family='"Liberation Sans", sans-serif' text-anchor="start" stroke="#8a4ef2" stroke-width="0.35">может лечить только 1 раз за игру</text>
<line x1="2530.3" y1="644.9499999999999" x2="2684.0" y2="644.9499999999999" stroke="#8a4ef2" stroke-width="1.5"/>
<text x="2530.8" y="649.95" font-size="5.0" fill="#8a4ef2" font-weight="bold" font-family='"Liberation Sans", sans-serif' text-anchor="start" stroke="#8a4ef2" stroke-width="0.35">от 3 игроков</text>
<rect x="2523" y="667.7" width="168.3" height="60.900000000000006" rx="3.5" fill="none" stroke="#8a4ef2" stroke-width="1.5"/>
<rect x="2530.3" y="675.1" width="153.70000000000002" height="46.2" rx="0" fill="none" stroke="#8a4ef2" stroke-width="1.5"/>
<rect x="2530.3" y="675.1" width="15.3" height="15.5" rx="0" fill="none" stroke="#8a4ef2" stroke-width="1.5"/>
<line x1="2530.3" y1="693.6" x2="2684.0" y2="693.6" stroke="#8a4ef2" stroke-width="1.5"/>
<text x="2548.8" y="688.7" font-size="6.7" fill="#8a4ef2" font-weight="bold" font-family='"Liberation Sans", sans-serif' text-anchor="start" stroke="#8a4ef2" stroke-width="0.25">Комиссар Росси</text>
<text x="2530.6000000000004" y="702.6" font-size="4.9" fill="#8a4ef2" font-weight="bold" font-family='"Liberation Sans", sans-serif' text-anchor="start" stroke="#8a4ef2" stroke-width="0.35">Ночью может проверить игрока и узнать его роль или убить</text>
<text x="2530.6000000000004" y="709.75" font-size="4.9" fill="#8a4ef2" font-weight="bold" font-family='"Liberation Sans", sans-serif' text-anchor="start" stroke="#8a4ef2" stroke-width="0.35">кого-то</text>
<line x1="2530.3" y1="714.4999999999999" x2="2684.0" y2="714.4999999999999" stroke="#8a4ef2" stroke-width="1.5"/>
<text x="2530.8" y="719.5000000000001" font-size="5.0" fill="#8a4ef2" font-weight="bold" font-family='"Liberation Sans", sans-serif' text-anchor="start" stroke="#8a4ef2" stroke-width="0.35">от 6 игроков</text>
<rect x="2523" y="737" width="168.3" height="53.75" rx="3.5" fill="none" stroke="#8a4ef2" stroke-width="1.5"/>
<rect x="2530.3" y="744.4" width="153.70000000000002" height="39.05" rx="0" fill="none" stroke="#8a4ef2" stroke-width="1.5"/>
<rect x="2530.3" y="744.4" width="15.3" height="15.5" rx="0" fill="none" stroke="#8a4ef2" stroke-width="1.5"/>
<line x1="2530.3" y1="762.9" x2="2684.0" y2="762.9" stroke="#8a4ef2" stroke-width="1.5"/>
<text x="2548.8" y="758.0" font-size="6.7" fill="#8a4ef2" font-weight="bold" font-family='"Liberation Sans", sans-serif' text-anchor="start" stroke="#8a4ef2" stroke-width="0.25">Самоубийца</text>
<text x="2530.6000000000004" y="771.9" font-size="4.9" fill="#8a4ef2" font-weight="bold" font-family='"Liberation Sans", sans-serif' text-anchor="start" stroke="#8a4ef2" stroke-width="0.35">Для победы нужно умереть на дневном голосовании&quot;</text>
<line x1="2530.3" y1="776.6499999999999" x2="2684.0" y2="776.6499999999999" stroke="#8a4ef2" stroke-width="1.5"/>
<text x="2530.8" y="781.65" font-size="5.0" fill="#8a4ef2" font-weight="bold" font-family='"Liberation Sans", sans-serif' text-anchor="start" stroke="#8a4ef2" stroke-width="0.35">от 8 игроков</text>
<rect x="2523" y="799.2" width="168.3" height="60.900000000000006" rx="3.5" fill="none" stroke="#8a4ef2" stroke-width="1.5"/>
<rect x="2530.3" y="806.6" width="153.70000000000002" height="46.2" rx="0" fill="none" stroke="#8a4ef2" stroke-width="1.5"/>
<rect x="2530.3" y="806.6" width="15.3" height="15.5" rx="0" fill="none" stroke="#8a4ef2" stroke-width="1.5"/>
<line x1="2530.3" y1="825.1" x2="2684.0" y2="825.1" stroke="#8a4ef2" stroke-width="1.5"/>
<text x="2548.8" y="820.2" font-size="6.7" fill="#8a4ef2" font-weight="bold" font-family='"Liberation Sans", sans-serif' text-anchor="start" stroke="#8a4ef2" stroke-width="0.25">Бомж</text>
<text x="2530.6000000000004" y="834.1" font-size="4.9" fill="#8a4ef2" font-weight="bold" font-family='"Liberation Sans", sans-serif' text-anchor="start" stroke="#8a4ef2" stroke-width="0.35">Ночью ходит к игрокам и видит всех, кто посещал этого</text>
<text x="2530.6000000000004" y="841.25" font-size="4.9" fill="#8a4ef2" font-weight="bold" font-family='"Liberation Sans", sans-serif' text-anchor="start" stroke="#8a4ef2" stroke-width="0.35">игрока</text>
<line x1="2530.3" y1="845.9999999999999" x2="2684.0" y2="845.9999999999999" stroke="#8a4ef2" stroke-width="1.5"/>
<text x="2530.8" y="851.0000000000001" font-size="5.0" fill="#8a4ef2" font-weight="bold" font-family='"Liberation Sans", sans-serif' text-anchor="start" stroke="#8a4ef2" stroke-width="0.35">от 10 игроков</text>
<rect x="2523" y="868.4" width="168.3" height="75.2" rx="3.5" fill="none" stroke="#8a4ef2" stroke-width="1.5"/>
<rect x="2530.3" y="875.8" width="153.70000000000002" height="60.5" rx="0" fill="none" stroke="#8a4ef2" stroke-width="1.5"/>
<rect x="2530.3" y="875.8" width="15.3" height="15.5" rx="0" fill="none" stroke="#8a4ef2" stroke-width="1.5"/>
<line x1="2530.3" y1="894.3" x2="2684.0" y2="894.3" stroke="#8a4ef2" stroke-width="1.5"/>
<text x="2548.8" y="889.4" font-size="6.7" fill="#8a4ef2" font-weight="bold" font-family='"Liberation Sans", sans-serif' text-anchor="start" stroke="#8a4ef2" stroke-width="0.25">Любовница</text>
<text x="2530.6000000000004" y="903.3" font-size="4.9" fill="#8a4ef2" font-weight="bold" font-family='"Liberation Sans", sans-serif' text-anchor="start" stroke="#8a4ef2" stroke-width="0.35">Проводит ночь с игроком, ход этого игрока ночью</text>
<text x="2530.6000000000004" y="910.4499999999999" font-size="4.9" fill="#8a4ef2" font-weight="bold" font-family='"Liberation Sans", sans-serif' text-anchor="start" stroke="#8a4ef2" stroke-width="0.35">отменяется, если игрока не посещал доктор, то днём он</text>
<text x="2530.6000000000004" y="917.5999999999999" font-size="4.9" fill="#8a4ef2" font-weight="bold" font-family='"Liberation Sans", sans-serif' text-anchor="start" stroke="#8a4ef2" stroke-width="0.35">лечится и не может ничего писать в чат и участвовать в</text>
<text x="2530.6000000000004" y="924.75" font-size="4.9" fill="#8a4ef2" font-weight="bold" font-family='"Liberation Sans", sans-serif' text-anchor="start" stroke="#8a4ef2" stroke-width="0.35">голосовании</text>
<line x1="2530.3" y1="929.4999999999999" x2="2684.0" y2="929.4999999999999" stroke="#8a4ef2" stroke-width="1.5"/>
<text x="2530.8" y="934.5" font-size="5.0" fill="#8a4ef2" font-weight="bold" font-family='"Liberation Sans", sans-serif' text-anchor="start" stroke="#8a4ef2" stroke-width="0.35">от 12 игроков</text>
<rect x="2523" y="952" width="168.3" height="60.900000000000006" rx="3.5" fill="none" stroke="#8a4ef2" stroke-width="1.5"/>
<rect x="2530.3" y="959.4" width="153.70000000000002" height="46.2" rx="0" fill="none" stroke="#8a4ef2" stroke-width="1.5"/>
<rect x="2530.3" y="959.4" width="15.3" height="15.5" rx="0" fill="none" stroke="#8a4ef2" stroke-width="1.5"/>
<line x1="2530.3" y1="977.9" x2="2684.0" y2="977.9" stroke="#8a4ef2" stroke-width="1.5"/>
<text x="2548.8" y="973.0" font-size="6.7" fill="#8a4ef2" font-weight="bold" font-family='"Liberation Sans", sans-serif' text-anchor="start" stroke="#8a4ef2" stroke-width="0.25">Хакер</text>
<text x="2530.6000000000004" y="986.9" font-size="4.9" fill="#8a4ef2" font-weight="bold" font-family='"Liberation Sans", sans-serif' text-anchor="start" stroke="#8a4ef2" stroke-width="0.35">Играет за мафию, взламывает ПК игроков и узнает их роли,</text>
<text x="2530.6000000000004" y="994.05" font-size="4.9" fill="#8a4ef2" font-weight="bold" font-family='"Liberation Sans", sans-serif' text-anchor="start" stroke="#8a4ef2" stroke-width="0.35">все мафиози будут видеть роль этого игрока</text>
<line x1="2530.3" y1="998.7999999999998" x2="2684.0" y2="998.7999999999998" stroke="#8a4ef2" stroke-width="1.5"/>
<text x="2530.8" y="1003.8000000000001" font-size="5.0" fill="#8a4ef2" font-weight="bold" font-family='"Liberation Sans", sans-serif' text-anchor="start" stroke="#8a4ef2" stroke-width="0.35">от 12 игроков</text>
<rect x="2523" y="1021.2" width="168.3" height="60.900000000000006" rx="3.5" fill="none" stroke="#8a4ef2" stroke-width="1.5"/>
<rect x="2530.3" y="1028.6000000000001" width="153.70000000000002" height="46.2" rx="0" fill="none" stroke="#8a4ef2" stroke-width="1.5"/>
<rect x="2530.3" y="1028.6000000000001" width="15.3" height="15.5" rx="0" fill="none" stroke="#8a4ef2" stroke-width="1.5"/>
<line x1="2530.3" y1="1047.1000000000001" x2="2684.0" y2="1047.1000000000001" stroke="#8a4ef2" stroke-width="1.5"/>
<text x="2548.8" y="1042.2" font-size="6.7" fill="#8a4ef2" font-weight="bold" font-family='"Liberation Sans", sans-serif' text-anchor="start" stroke="#8a4ef2" stroke-width="0.25">Камикадзе</text>
<text x="2530.6000000000004" y="1056.1000000000001" font-size="4.9" fill="#8a4ef2" font-weight="bold" font-family='"Liberation Sans", sans-serif' text-anchor="start" stroke="#8a4ef2" stroke-width="0.35">Почти как мирный житель, но если его повесят, то может с</text>
<text x="2530.6000000000004" y="1063.2500000000002" font-size="4.9" fill="#8a4ef2" font-weight="bold" font-family='"Liberation Sans", sans-serif' text-anchor="start" stroke="#8a4ef2" stroke-width="0.35">собой забрать одного игрока</text>
<line x1="2530.3" y1="1068.0" x2="2684.0" y2="1068.0" stroke="#8a4ef2" stroke-width="1.5"/>
<text x="2530.8" y="1073.0000000000002" font-size="5.0" fill="#8a4ef2" font-weight="bold" font-family='"Liberation Sans", sans-serif' text-anchor="start" stroke="#8a4ef2" stroke-width="0.35">от 14 игроков</text>
<rect x="2523" y="1090" width="168.3" height="68.05000000000001" rx="3.5" fill="none" stroke="#8a4ef2" stroke-width="1.5"/>
<rect x="2530.3" y="1097.4" width="153.70000000000002" height="53.35000000000001" rx="0" fill="none" stroke="#8a4ef2" stroke-width="1.5"/>
<rect x="2530.3" y="1097.4" width="15.3" height="15.5" rx="0" fill="none" stroke="#8a4ef2" stroke-width="1.5"/>
<line x1="2530.3" y1="1115.9" x2="2684.0" y2="1115.9" stroke="#8a4ef2" stroke-width="1.5"/>
<text x="2548.8" y="1111.0" font-size="6.7" fill="#8a4ef2" font-weight="bold" font-family='"Liberation Sans", sans-serif' text-anchor="start" stroke="#8a4ef2" stroke-width="0.25">Сержант</text>
<text x="2530.6000000000004" y="1124.9" font-size="4.9" fill="#8a4ef2" font-weight="bold" font-family='"Liberation Sans", sans-serif' text-anchor="start" stroke="#8a4ef2" stroke-width="0.35">Помощник комиссара, ничего не может делать ночью, но</text>
<text x="2530.6000000000004" y="1132.0500000000002" font-size="4.9" fill="#8a4ef2" font-weight="bold" font-family='"Liberation Sans", sans-serif' text-anchor="start" stroke="#8a4ef2" stroke-width="0.35">видит всех, к кому ходит комиссар. После смерти комиссара</text>
<text x="2530.6000000000004" y="1139.2" font-size="4.9" fill="#8a4ef2" font-weight="bold" font-family='"Liberation Sans", sans-serif' text-anchor="start" stroke="#8a4ef2" stroke-width="0.35">сам становится им и продолжает его дело</text>
<line x1="2530.3" y1="1143.95" x2="2684.0" y2="1143.95" stroke="#8a4ef2" stroke-width="1.5"/>
<text x="2530.8" y="1148.95" font-size="5.0" fill="#8a4ef2" font-weight="bold" font-family='"Liberation Sans", sans-serif' text-anchor="start" stroke="#8a4ef2" stroke-width="0.35">от 15 игроков</text>
<rect x="2523" y="1167" width="168.3" height="60.900000000000006" rx="3.5" fill="none" stroke="#8a4ef2" stroke-width="1.5"/>
<rect x="2530.3" y="1174.4" width="153.70000000000002" height="46.2" rx="0" fill="none" stroke="#8a4ef2" stroke-width="1.5"/>
<rect x="2530.3" y="1174.4" width="15.3" height="15.5" rx="0" fill="none" stroke="#8a4ef2" stroke-width="1.5"/>
<line x1="2530.3" y1="1192.9" x2="2684.0" y2="1192.9" stroke="#8a4ef2" stroke-width="1.5"/>
<text x="2548.8" y="1188.0" font-size="6.7" fill="#8a4ef2" font-weight="bold" font-family='"Liberation Sans", sans-serif' text-anchor="start" stroke="#8a4ef2" stroke-width="0.25">Счастливчик</text>
<text x="2530.6000000000004" y="1201.9" font-size="4.9" fill="#8a4ef2" font-weight="bold" font-family='"Liberation Sans", sans-serif' text-anchor="start" stroke="#8a4ef2" stroke-width="0.35">Тот же мирный житель, но при попытке убить его есть шанс</text>
<text x="2530.6000000000004" y="1209.0500000000002" font-size="4.9" fill="#8a4ef2" font-weight="bold" font-family='"Liberation Sans", sans-serif' text-anchor="start" stroke="#8a4ef2" stroke-width="0.35">50% остаться в живых</text>
<line x1="2530.3" y1="1213.8" x2="2684.0" y2="1213.8" stroke="#8a4ef2" stroke-width="1.5"/>
<text x="2530.8" y="1218.8000000000002" font-size="5.0" fill="#8a4ef2" font-weight="bold" font-family='"Liberation Sans", sans-serif' text-anchor="start" stroke="#8a4ef2" stroke-width="0.35">от 15 игроков</text>
<rect x="2523" y="1236.4" width="168.3" height="60.900000000000006" rx="3.5" fill="none" stroke="#8a4ef2" stroke-width="1.5"/>
<rect x="2530.3" y="1243.8000000000002" width="153.70000000000002" height="46.2" rx="0" fill="none" stroke="#8a4ef2" stroke-width="1.5"/>
<rect x="2530.3" y="1243.8000000000002" width="15.3" height="15.5" rx="0" fill="none" stroke="#8a4ef2" stroke-width="1.5"/>
<line x1="2530.3" y1="1262.3000000000002" x2="2684.0" y2="1262.3000000000002" stroke="#8a4ef2" stroke-width="1.5"/>
<text x="2548.8" y="1257.4" font-size="6.7" fill="#8a4ef2" font-weight="bold" font-family='"Liberation Sans", sans-serif' text-anchor="start" stroke="#8a4ef2" stroke-width="0.25">Маньяк</text>
<text x="2530.6000000000004" y="1271.3000000000002" font-size="4.9" fill="#8a4ef2" font-weight="bold" font-family='"Liberation Sans", sans-serif' text-anchor="start" stroke="#8a4ef2" stroke-width="0.35">Какой-то псих, задача убить всех, выигрывает если</text>
<text x="2530.6000000000004" y="1278.4500000000003" font-size="4.9" fill="#8a4ef2" font-weight="bold" font-family='"Liberation Sans", sans-serif' text-anchor="start" stroke="#8a4ef2" stroke-width="0.35">жертвы все остальные игроки</text>
<line x1="2530.3" y1="1283.2" x2="2684.0" y2="1283.2" stroke="#8a4ef2" stroke-width="1.5"/>
<text x="2530.8" y="1288.2000000000003" font-size="5.0" fill="#8a4ef2" font-weight="bold" font-family='"Liberation Sans", sans-serif' text-anchor="start" stroke="#8a4ef2" stroke-width="0.35">от 16 игроков</text>
</g>
<rect x="1787" y="333" width="923" height="23.3" fill="#2c2c2c"/>
<rect x="1787" y="333" width="23" height="922" fill="#2c2c2c"/>
<line x1="1787" y1="356.4" x2="2710" y2="356.4" stroke="#3e3e3e" stroke-width="1"/>
<line x1="1809.8" y1="333" x2="1809.8" y2="1255" stroke="#3e3e3e" stroke-width="1"/>
<line x1="1844.6" y1="352" x2="1844.6" y2="356.4" stroke="#7d7d7d" stroke-width="1"/>
<text x="1844.6" y="346.8" font-size="11.2" fill="#8e8e8e" font-weight="normal" font-family='"Liberation Sans", sans-serif' text-anchor="middle" letter-spacing="0.25">-2750</text>
<line x1="1940.1625" y1="352" x2="1940.1625" y2="356.4" stroke="#7d7d7d" stroke-width="1"/>
<text x="1940.1625" y="346.8" font-size="11.2" fill="#8e8e8e" font-weight="normal" font-family='"Liberation Sans", sans-serif' text-anchor="middle" letter-spacing="0.25">-2500</text>
<line x1="2035.725" y1="352" x2="2035.725" y2="356.4" stroke="#7d7d7d" stroke-width="1"/>
<text x="2035.725" y="346.8" font-size="11.2" fill="#8e8e8e" font-weight="normal" font-family='"Liberation Sans", sans-serif' text-anchor="middle" letter-spacing="0.25">-2250</text>
<line x1="2131.2875" y1="352" x2="2131.2875" y2="356.4" stroke="#7d7d7d" stroke-width="1"/>
<text x="2131.2875" y="346.8" font-size="11.2" fill="#8e8e8e" font-weight="normal" font-family='"Liberation Sans", sans-serif' text-anchor="middle" letter-spacing="0.25">-2000</text>
<line x1="2226.85" y1="352" x2="2226.85" y2="356.4" stroke="#7d7d7d" stroke-width="1"/>
<text x="2226.85" y="346.8" font-size="11.2" fill="#8e8e8e" font-weight="normal" font-family='"Liberation Sans", sans-serif' text-anchor="middle" letter-spacing="0.25">-1750</text>
<line x1="2322.4125" y1="352" x2="2322.4125" y2="356.4" stroke="#7d7d7d" stroke-width="1"/>
<text x="2322.4125" y="346.8" font-size="11.2" fill="#8e8e8e" font-weight="normal" font-family='"Liberation Sans", sans-serif' text-anchor="middle" letter-spacing="0.25">-1500</text>
<line x1="2417.975" y1="352" x2="2417.975" y2="356.4" stroke="#7d7d7d" stroke-width="1"/>
<text x="2417.975" y="346.8" font-size="11.2" fill="#8e8e8e" font-weight="normal" font-family='"Liberation Sans", sans-serif' text-anchor="middle" letter-spacing="0.25">-1250</text>
<line x1="2513.5375" y1="352" x2="2513.5375" y2="356.4" stroke="#7d7d7d" stroke-width="1"/>
<text x="2513.5375" y="346.8" font-size="11.2" fill="#8e8e8e" font-weight="normal" font-family='"Liberation Sans", sans-serif' text-anchor="middle" letter-spacing="0.25">-1000</text>
<line x1="2609.1" y1="352" x2="2609.1" y2="356.4" stroke="#7d7d7d" stroke-width="1"/>
<text x="2609.1" y="346.8" font-size="11.2" fill="#8e8e8e" font-weight="normal" font-family='"Liberation Sans", sans-serif' text-anchor="middle" letter-spacing="0.25">-750</text>
<line x1="2704.6625" y1="352" x2="2704.6625" y2="356.4" stroke="#7d7d7d" stroke-width="1"/>
<text x="2704.6625" y="346.8" font-size="11.2" fill="#8e8e8e" font-weight="normal" font-family='"Liberation Sans", sans-serif' text-anchor="middle" letter-spacing="0.25">-500</text>
<line x1="1805" y1="429.0" x2="1809.8" y2="429.0" stroke="#7d7d7d" stroke-width="1"/>
<text x="0" y="0" font-size="11.2" letter-spacing="0.25" fill="#8e8e8e" font-family='"Liberation Sans", sans-serif' text-anchor="middle" transform="translate(1799.5,429.00) rotate(-90)">11750</text>
<line x1="1805" y1="524.5625" x2="1809.8" y2="524.5625" stroke="#7d7d7d" stroke-width="1"/>
<text x="0" y="0" font-size="11.2" letter-spacing="0.25" fill="#8e8e8e" font-family='"Liberation Sans", sans-serif' text-anchor="middle" transform="translate(1799.5,524.56) rotate(-90)">12000</text>
<line x1="1805" y1="620.125" x2="1809.8" y2="620.125" stroke="#7d7d7d" stroke-width="1"/>
<text x="0" y="0" font-size="11.2" letter-spacing="0.25" fill="#8e8e8e" font-family='"Liberation Sans", sans-serif' text-anchor="middle" transform="translate(1799.5,620.12) rotate(-90)">12250</text>
<line x1="1805" y1="715.6875" x2="1809.8" y2="715.6875" stroke="#7d7d7d" stroke-width="1"/>
<text x="0" y="0" font-size="11.2" letter-spacing="0.25" fill="#8e8e8e" font-family='"Liberation Sans", sans-serif' text-anchor="middle" transform="translate(1799.5,715.69) rotate(-90)">12500</text>
<line x1="1805" y1="811.25" x2="1809.8" y2="811.25" stroke="#7d7d7d" stroke-width="1"/>
<text x="0" y="0" font-size="11.2" letter-spacing="0.25" fill="#8e8e8e" font-family='"Liberation Sans", sans-serif' text-anchor="middle" transform="translate(1799.5,811.25) rotate(-90)">12750</text>
<line x1="1805" y1="906.8125" x2="1809.8" y2="906.8125" stroke="#7d7d7d" stroke-width="1"/>
<text x="0" y="0" font-size="11.2" letter-spacing="0.25" fill="#8e8e8e" font-family='"Liberation Sans", sans-serif' text-anchor="middle" transform="translate(1799.5,906.81) rotate(-90)">13000</text>
<line x1="1805" y1="1002.375" x2="1809.8" y2="1002.375" stroke="#7d7d7d" stroke-width="1"/>
<text x="0" y="0" font-size="11.2" letter-spacing="0.25" fill="#8e8e8e" font-family='"Liberation Sans", sans-serif' text-anchor="middle" transform="translate(1799.5,1002.38) rotate(-90)">13250</text>
<line x1="1805" y1="1097.9375" x2="1809.8" y2="1097.9375" stroke="#7d7d7d" stroke-width="1"/>
<text x="0" y="0" font-size="11.2" letter-spacing="0.25" fill="#8e8e8e" font-family='"Liberation Sans", sans-serif' text-anchor="middle" transform="translate(1799.5,1097.94) rotate(-90)">13500</text>
<line x1="1805" y1="1193.5" x2="1809.8" y2="1193.5" stroke="#7d7d7d" stroke-width="1"/>
<text x="0" y="0" font-size="11.2" letter-spacing="0.25" fill="#8e8e8e" font-family='"Liberation Sans", sans-serif' text-anchor="middle" transform="translate(1799.5,1193.50) rotate(-90)">13750</text>
</g>
<rect x="1787.5" y="333.5" width="922" height="921" rx="12" fill="none" stroke="#383838" stroke-width="1"/>
</svg>
</div></body></html>
